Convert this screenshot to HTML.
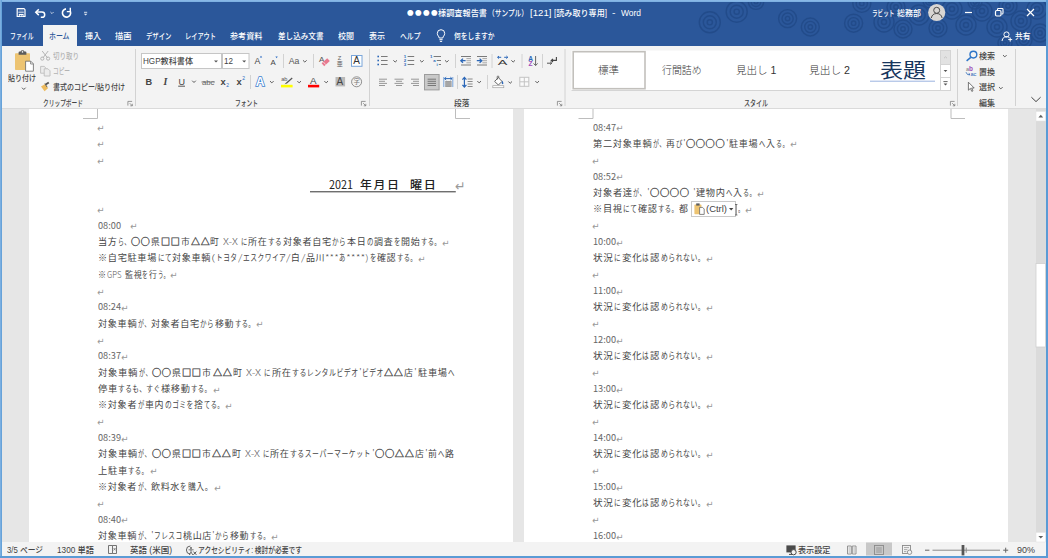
<!DOCTYPE html>
<html lang="ja">
<head>
<meta charset="utf-8">
<title>Word</title>
<style>
html,body{margin:0;padding:0;background:#fff;}
body{width:1048px;height:558px;overflow:hidden;font-family:"Liberation Sans","Noto Sans CJK JP",sans-serif;}
#app{position:relative;width:1048px;height:558px;overflow:hidden;background:#e6e6e6;}
.t{position:absolute;white-space:pre;transform-origin:0 50%;display:block;}
.b{position:absolute;display:block;}
svg{position:absolute;overflow:visible;}

</style>
</head>
<body>
<div id="app">
<!-- window chrome backgrounds -->
<div class="b" id="titlebar" style="left:0;top:0;width:1048px;height:46px;background:#2b579a;"></div>
<div class="b" id="hometab" style="left:43px;top:25px;width:33.5px;height:22px;background:#f3f3f3;"></div>
<div class="b" id="ribbon" style="left:0;top:46px;width:1048px;height:63px;background:#f3f3f3;"></div>
<div class="b" id="pageL" style="left:29px;top:109px;width:483.5px;height:433px;background:#fff;"></div>
<div class="b" id="pageR" style="left:523.5px;top:109px;width:484.5px;height:433px;background:#fff;"></div>
<div class="b" id="vscroll" style="left:1035.5px;top:109px;width:11px;height:433px;background:#dbdbdb;"></div>
<div class="b" id="statusbar" style="left:0;top:542px;width:1048px;height:16px;background:#f3f3f3;"></div>
<svg id="gfx" width="1048" height="558" viewBox="0 0 1048 558" style="left:0;top:0;">
<defs>
<path id="dd" d="M-1.8,-0.9 L0,0.9 L1.8,-0.9" fill="none" stroke="#5a5a5a" stroke-width="1"/>
<path id="dl" d="M0.4,4.6 V0.4 H4.6 M2.2,2.2 L4.8,4.8 M4.8,2.8 V4.8 H2.8" fill="none" stroke="#7a7a7a" stroke-width="0.75"/>
<clipPath id="tbclip"><rect x="0" y="0" width="1046" height="46"/></clipPath>
</defs>
<!-- title bar decorative rings -->
<g fill="none" stroke="#1f4784" stroke-width="1.4" opacity="0.7" clip-path="url(#tbclip)">
<circle cx="709.8" cy="22.3" r="10.5"/><circle cx="709.8" cy="22.3" r="6.5"/><circle cx="709.8" cy="22.3" r="2.6"/>
<circle cx="736.7" cy="11.7" r="10.5"/><circle cx="736.7" cy="11.7" r="6.5"/><circle cx="736.7" cy="11.7" r="2.6"/>
<circle cx="756" cy="1.7" r="7.7"/><circle cx="756" cy="1.7" r="4.8"/><circle cx="756" cy="1.7" r="1.9"/>
<circle cx="787.6" cy="18.6" r="9"/><circle cx="787.6" cy="18.6" r="5.6"/><circle cx="787.6" cy="18.6" r="2.2"/>
<circle cx="810.3" cy="27" r="9"/><circle cx="810.3" cy="27" r="5.6"/><circle cx="810.3" cy="27" r="2.2"/>
<circle cx="853.6" cy="23.2" r="9"/><circle cx="853.6" cy="23.2" r="5.6"/><circle cx="853.6" cy="23.2" r="2.2"/>
<circle cx="861.8" cy="3.4" r="9"/><circle cx="861.8" cy="3.4" r="5.6"/><circle cx="861.8" cy="3.4" r="2.2"/>
<circle cx="884" cy="22" r="10"/><circle cx="884" cy="22" r="6.2"/><circle cx="884" cy="22" r="2.5"/>
<circle cx="903" cy="29" r="9"/><circle cx="903" cy="29" r="5.6"/><circle cx="903" cy="29" r="2.2"/>
<circle cx="896" cy="7" r="9"/><circle cx="896" cy="7" r="5.6"/><circle cx="896" cy="7" r="2.2"/>
<circle cx="919" cy="15" r="10"/><circle cx="919" cy="15" r="6.2"/><circle cx="919" cy="15" r="2.5"/>
<circle cx="938" cy="28" r="9"/><circle cx="938" cy="28" r="5.6"/><circle cx="938" cy="28" r="2.2"/>
<circle cx="952" cy="9" r="10"/><circle cx="952" cy="9" r="6.2"/><circle cx="952" cy="9" r="2.5"/>
<circle cx="966" cy="25" r="10"/><circle cx="966" cy="25" r="6.2"/><circle cx="966" cy="25" r="2.5"/>
<circle cx="982" cy="11" r="10"/><circle cx="982" cy="11" r="6.2"/><circle cx="982" cy="11" r="2.5"/>
<circle cx="997" cy="27" r="10"/><circle cx="997" cy="27" r="6.2"/><circle cx="997" cy="27" r="2.5"/>
<circle cx="1008" cy="6" r="9"/><circle cx="1008" cy="6" r="5.6"/><circle cx="1008" cy="6" r="2.2"/>
<circle cx="1021" cy="21" r="10"/><circle cx="1021" cy="21" r="6.2"/><circle cx="1021" cy="21" r="2.5"/>
<circle cx="1037" cy="9" r="10"/><circle cx="1037" cy="9" r="6.2"/><circle cx="1037" cy="9" r="2.5"/>
<circle cx="1040" cy="33" r="9"/><circle cx="1040" cy="33" r="5.6"/><circle cx="1040" cy="33" r="2.2"/>
<circle cx="1024" cy="40" r="8"/><circle cx="1024" cy="40" r="5.0"/><circle cx="1024" cy="40" r="2.0"/>
<circle cx="1005" cy="43" r="7"/><circle cx="1005" cy="43" r="4.3"/><circle cx="1005" cy="43" r="1.8"/>
<circle cx="975" cy="2" r="7"/><circle cx="975" cy="2" r="4.3"/><circle cx="975" cy="2" r="1.8"/>
<circle cx="930" cy="1" r="7"/><circle cx="930" cy="1" r="4.3"/><circle cx="930" cy="1" r="1.8"/>
</g>
<!-- QAT -->
<g id="qat" fill="none" stroke="#fff">
<path d="M17.2,8.7 H24 L25,9.7 V16.5 H17.2 Z" stroke-width="1.2"/>
<rect x="18.8" y="13.9" width="4.8" height="2.8" fill="#fff" stroke="none"/>
<path d="M18.4,12.2 H23.8" stroke-width="0.9"/>
<rect x="18.8" y="9.2" width="4.8" height="2.4" fill="#fff" stroke="none" opacity="0.18"/>
<rect x="19.8" y="15" width="1" height="1.2" fill="#2b579a" stroke="none"/><rect x="21.6" y="15" width="1" height="1.2" fill="#2b579a" stroke="none"/>
<path d="M36,12.1 H42 A2.7,2.6 0 0 1 42,17.3 H40.8" stroke-width="1.5"/>
<path d="M38.8,9.3 L35.8,12.2 L38.8,15.1" stroke-width="1.5"/>
<path d="M50.4,12 L52,13.6 L53.6,12" stroke-width="1" opacity="0.7"/>
<path d="M66,8.9 A4.1,4.1 0 1 0 70.4,11.6" stroke-width="1.6"/>
<path d="M70.3,7.8 V11.6 H66.8" stroke-width="1.4"/>
<path d="M84,12.3 H87.2" stroke-width="1" opacity="0.8"/>
<path d="M83.8,13.8 L85.6,15.6 L87.4,13.8 Z" fill="#fff" stroke="none" opacity="0.85"/>
</g>
<!-- account avatar and window buttons -->
<circle cx="936.7" cy="12.5" r="8.6" fill="#d9d6d3"/>
<circle cx="936.7" cy="10.3" r="3" fill="none" stroke="#4a4a4a" stroke-width="1"/>
<path d="M931.3,18 A5.5,5.5 0 0 1 942.1,18" fill="none" stroke="#4a4a4a" stroke-width="1"/>
<path d="M965,12.5 H972" stroke="#fff" stroke-width="1.2"/>
<rect x="995.5" y="10.5" width="5.5" height="5.5" rx="1.2" fill="none" stroke="#fff" stroke-width="1.2"/>
<path d="M997.5,10 V9.2 A0.8,0.8 0 0 1 998.3,8.5 H1002.2 A0.8,0.8 0 0 1 1003,9.3 V13.3 A0.8,0.8 0 0 1 1002.2,14 H1001.5" fill="none" stroke="#fff" stroke-width="1.1"/>
<path d="M1027,9 L1034,16 M1034,9 L1027,16" stroke="#fff" stroke-width="1.2"/>
<!-- share icon -->
<circle cx="1006.5" cy="34.5" r="2.6" fill="none" stroke="#fff" stroke-width="1"/>
<path d="M1002,41 A4.6,4.6 0 0 1 1009.5,37.6" fill="none" stroke="#fff" stroke-width="1"/>
<path d="M1008.2,39.6 H1012.2 M1010.2,37.6 V41.6" stroke="#fff" stroke-width="1"/>
<!-- tell me bulb -->
<path d="M439.2,38 C439.2,36.3 437.3,35.8 437.3,33.4 A3.7,3.7 0 0 1 444.7,33.4 C444.7,35.8 442.8,36.3 442.8,38 Z" fill="none" stroke="#fff" stroke-width="1"/>
<path d="M439.4,39.7 H442.6 M439.9,41.4 H442.1" stroke="#fff" stroke-width="1"/>
<!-- ribbon bottom edge -->
<path d="M2,108.5 H1046" stroke="#dadada" stroke-width="1"/>
<!-- ribbon group separators -->
<g stroke="#d2d2d2" stroke-width="1">
<path d="M135.5,49 V106 M369.5,49 V106 M565,49 V106 M957.5,49 V106 M1015.5,49 V106"/>
<path d="M283.5,54 V68 M313.5,54 V68 M455.5,54 V68 M492,54 V68 M522,54 V68 M542.5,54 V68"/>
<path d="M250.5,75 V89 M457.5,75 V89 M487.5,75 V89"/>
</g>
<!-- dialog launchers -->
<use href="#dl" x="127.5" y="101"/><use href="#dl" x="361" y="101"/><use href="#dl" x="557" y="101"/><use href="#dl" x="950" y="101"/>
<!-- paste -->
<rect x="15" y="53.2" width="15" height="16.8" rx="0.8" fill="#edc472"/>
<path d="M18.6,54.8 V52.6 Q18.6,51.6 19.6,51.6 H20.6 Q20.8,50.2 22.5,50.2 Q24.2,50.2 24.4,51.6 H25.4 Q26.4,51.6 26.4,52.6 V54.8 Z" fill="#5b5b5b"/>
<circle cx="22.5" cy="51.9" r="0.8" fill="#f3f3f3"/>
<path d="M25.6,61.2 H30.8 L33.4,63.8 V71.2 H25.6 Z" fill="#fff" stroke="#666" stroke-width="0.8"/>
<path d="M30.6,61.4 V64 H33.2" fill="none" stroke="#666" stroke-width="0.7"/>
<use href="#dd" x="23.8" y="88.6"/>
<!-- cut (disabled) -->
<g fill="none" stroke="#b4b4b4" stroke-width="1">
<path d="M42.2,51 L47.6,58 M48.2,51 L42.8,58"/>
<circle cx="42.3" cy="58.6" r="1.6"/><circle cx="48.1" cy="58.6" r="1.6"/>
</g>
<!-- copy (disabled) -->
<g fill="#ececec" stroke="#bdbdbd" stroke-width="0.9">
<path d="M40.6,66.4 H44.2 L46,68.2 V73.2 H40.6 Z"/>
<path d="M44.2,68.8 H48 L50,70.8 V76 H44.2 Z"/>
</g>
<!-- format painter -->
<path d="M41,86.6 L45.2,84 L48,88.2 L44.6,91.2 Z" fill="#edbb5e"/>
<path d="M45.6,84.6 L48.8,82.4" stroke="#555" stroke-width="1.8"/>
<path d="M44.8,83.6 L47.2,87.2" stroke="#555" stroke-width="0.9"/>
<!-- font name/size boxes -->
<rect x="141.5" y="53.5" width="80" height="15" fill="#fff" stroke="#c6c6c6" stroke-width="1"/>
<rect x="222.5" y="53.5" width="26.5" height="15" fill="#fff" stroke="#c6c6c6" stroke-width="1"/>
<path d="M214,60.4 H218 L216,62.6 Z M242.2,60.4 H246.2 L244.2,62.6 Z" fill="#555"/>
<!-- B I U abc x2 x2 -->
<g font-family="Liberation Sans, sans-serif" fill="#444" font-size="11">
<text x="145.6" y="84.9" font-weight="700" font-size="9.2">B</text>
<text x="163.6" y="84.9" font-style="italic" font-weight="700" font-family="Liberation Serif, serif" font-size="9.8">I</text>
<text x="178.4" y="84.6" font-size="9">U</text>
<text x="202" y="84.6" font-size="8" textLength="12.5" lengthAdjust="spacingAndGlyphs" fill="#666">abc</text>
<text x="220.6" y="85" font-weight="700" font-size="9.4">x</text>
<text x="226.2" y="86.6" font-size="5" fill="#2b6cc4">2</text>
<text x="236.6" y="85" font-weight="700" font-size="9.4">x</text>
<text x="242.2" y="80.4" font-size="5" fill="#2b6cc4">2</text>
</g>
<path d="M178.2,86.2 H185" stroke="#444" stroke-width="0.9"/>
<path d="M201.4,82 H215" stroke="#666" stroke-width="0.7"/>
<use href="#dd" x="194" y="81.6"/>
<!-- grow / shrink font -->
<g font-family="Liberation Sans, sans-serif" fill="#444">
<text x="254.4" y="64" font-size="8.8">A</text>
<text x="270.4" y="64.5" font-size="7.8">A</text>
<text x="288.8" y="63.6" font-size="8.4" textLength="10.6" lengthAdjust="spacingAndGlyphs" fill="#555">Aa</text>
</g>
<path d="M259.8,57.6 L261,55.8 L262.2,57.6 Z" fill="#2b6cc4"/>
<path d="M275.4,56.4 L276.6,58.2 L277.8,56.4 Z" fill="#2b6cc4"/>
<use href="#dd" x="304.8" y="61.2"/>
<!-- clear formatting -->
<text x="319" y="62.4" font-family="Liberation Sans, sans-serif" font-size="8" fill="#555">A</text>
<path d="M321.6,63.2 L327.2,58.2 L329.8,61 L324.2,66.2 Z" fill="#e8798f"/>
<path d="M323.2,61.8 L325.8,64.7" stroke="#f3f3f3" stroke-width="0.7"/>
<!-- phonetic guide -->
<g fill="#666" font-family="Liberation Sans, sans-serif">
<text x="337.8" y="60.2" font-size="5.8">Z</text>
<text x="336.8" y="66.4" font-size="6" font-family="Liberation Sans, Noto Sans CJK JP, sans-serif">亜</text>
</g>
<!-- char border -->
<rect x="351.5" y="55.5" width="10.5" height="10.8" fill="#fff" stroke="#7aa6da" stroke-width="1"/>
<text x="353.2" y="64.4" font-family="Liberation Sans, sans-serif" font-size="10" fill="#333">A</text>
<!-- text effects -->
<text x="255.8" y="86.4" font-family="Liberation Sans, sans-serif" font-size="12.2" font-weight="700" fill="#fff" stroke="#3d7fd0" stroke-width="1.5" paint-order="stroke">A</text>
<use href="#dd" x="271.8" y="82"/>
<!-- highlight -->
<text x="281.2" y="81.2" font-family="Liberation Sans, sans-serif" font-size="5.6" fill="#555">ab</text>
<path d="M284.6,84.2 L286.2,82.6 L291.8,77.4 L292.6,78.4 L287,83.6 Z" fill="#555"/>
<rect x="281" y="84.8" width="11.6" height="2.6" fill="#ffff00"/>
<use href="#dd" x="299.2" y="82"/>
<!-- font color -->
<text x="310" y="84" font-family="Liberation Sans, sans-serif" font-size="9.8" fill="#444">A</text>
<rect x="308" y="84.8" width="11.2" height="2.6" fill="#ff0000"/>
<use href="#dd" x="326.2" y="82"/>
<!-- char shading -->
<rect x="335.5" y="77" width="9.6" height="9.4" fill="#b9b9b9"/>
<text x="336.6" y="85.4" font-family="Liberation Sans, sans-serif" font-size="10" fill="#444">A</text>
<!-- enclosed char -->
<circle cx="356.6" cy="81.8" r="5" fill="none" stroke="#777" stroke-width="0.8"/>
<text x="353.4" y="84.4" font-family="Liberation Sans, Noto Sans CJK JP, sans-serif" font-size="6.4" fill="#777">字</text>
<!-- paragraph group row 1 -->
<g fill="#2b67b8">
<rect x="377.4" y="55.7" width="1.6" height="1.6"/><rect x="377.4" y="59.7" width="1.6" height="1.6"/><rect x="377.4" y="63.7" width="1.6" height="1.6"/>
</g>
<path d="M381,56.5 H387.6 M381,60.5 H387.6 M381,64.5 H387.6" stroke="#7a7a7a" stroke-width="1"/>
<use href="#dd" x="395.2" y="61.2"/>
<g font-family="Liberation Sans, sans-serif" font-size="4.4" fill="#2b67b8" font-weight="700">
<text x="403.8" y="58.2">1</text><text x="403.8" y="62.2">2</text><text x="403.8" y="66.2">3</text>
</g>
<path d="M407.6,56.5 H414.2 M407.6,60.5 H414.2 M407.6,64.5 H414.2" stroke="#7a7a7a" stroke-width="1"/>
<use href="#dd" x="421.8" y="61.2"/>
<g font-family="Liberation Sans, sans-serif" font-size="4.4" fill="#2b67b8" font-weight="700">
<text x="430" y="58.2">1</text><text x="433.2" y="62.2">a</text><text x="436.4" y="66.2">i</text>
</g>
<path d="M433.6,56.5 H441 M436.8,60.5 H441 M438.8,64.5 H441" stroke="#7a7a7a" stroke-width="1"/>
<use href="#dd" x="446.8" y="61.2"/>
<!-- indent icons -->
<g stroke="#7a7a7a" stroke-width="1">
<path d="M461,56.5 H471 M461,65 H471 M477,56.5 H487 M477,65 H487"/>
<path d="M466.4,58.6 H471 M466.4,60.7 H471 M466.4,62.8 H471 M482.4,58.6 H487 M482.4,60.7 H487 M482.4,62.8 H487" stroke="#a8a8a8"/>
</g>
<g stroke="#2b67b8" stroke-width="1.3" fill="none">
<path d="M465.6,60.7 H461 M463,58.6 L460.8,60.7 L463,62.8"/>
<path d="M476.8,60.7 H481.6 M479.6,58.6 L481.8,60.7 L479.6,62.8"/>
</g>
<!-- asian layout -->
<text x="497.8" y="64.6" font-family="Liberation Sans, sans-serif" font-size="7.8" fill="#3a3a3a" textLength="9.6" lengthAdjust="spacingAndGlyphs">A</text>
<g stroke="#2b67b8" stroke-width="1" fill="none">
<path d="M497.6,57.3 H501.2 M499,56 L497.6,57.3 L499,58.6"/>
<path d="M504.2,57.3 H507.8 M506.4,56 L507.8,57.3 L506.4,58.6"/>
</g>
<use href="#dd" x="513.2" y="61.2"/>
<!-- sort -->
<text x="528.2" y="60.6" font-family="Liberation Sans, sans-serif" font-size="6.6" font-weight="700" fill="#2b67b8">A</text>
<text x="528.4" y="66.2" font-family="Liberation Sans, sans-serif" font-size="6.6" font-weight="700" fill="#a04cb8">Z</text>
<path d="M535.6,56 V65.4 M533.6,63.4 L535.6,65.6 L537.6,63.4" stroke="#666" stroke-width="1" fill="none"/>
<!-- show marks -->
<g stroke="#444" stroke-width="1.1" fill="none">
<path d="M556.4,57 V60.4 H551.4 M553,58.8 L551.2,60.4 L553,62"/>
<path d="M547,63.2 H551.6 M550.2,61.8 L551.8,63.2 L550.2,64.6" stroke-width="0.9"/>
</g>
<!-- alignment row -->
<g stroke="#8c8c8c" stroke-width="0.9">
<path d="M379,79.2 H387 M379,81.3 H385 M379,83.4 H387 M379,85.5 H385"/>
<path d="M394.5,79.2 H403.5 M396,81.3 H402 M394.5,83.4 H403.5 M396,85.5 H402"/>
<path d="M411,79.2 H419 M413,81.3 H419 M411,83.4 H419 M413,85.5 H419"/>
</g>
<rect x="424.5" y="74.5" width="14.6" height="15.4" fill="#c9c9c9" stroke="#9c9c9c" stroke-width="1"/>
<path d="M427.6,79.2 H436 M427.6,81.3 H436 M427.6,83.4 H436 M427.6,85.5 H436" stroke="#777" stroke-width="1"/>
<!-- distributed -->
<path d="M443.8,77 V87 M452.8,77 V87" stroke="#6a9bd8" stroke-width="0.9"/>
<path d="M444.6,78.6 H452 M446.2,77.2 L444.6,78.6 L446.2,80 M450.4,77.2 L452,78.6 L450.4,80" stroke="#2b67b8" stroke-width="1" fill="none"/>
<rect x="445.2" y="81" width="6.4" height="6" fill="#9f9f9f"/>
<path d="M445.2,83 H451.6 M445.2,85 H451.6" stroke="#bdbdbd" stroke-width="0.5"/>
<!-- line spacing -->
<path d="M464.4,77.6 V86.8 M462.4,79.6 L464.4,77.4 L466.4,79.6 M462.4,84.8 L464.4,87 L466.4,84.8" stroke="#2b67b8" stroke-width="1.2" fill="none"/>
<path d="M467.6,79 H472.6 M467.6,81.5 H472.6 M467.6,84 H472.6 M467.6,86.5 H472.6" stroke="#8a8a8a" stroke-width="1"/>
<use href="#dd" x="479.2" y="82"/>
<!-- shading bucket -->
<path d="M494.6,81.4 L498.4,77.6 L502,81.4 L498.4,85 Z" fill="#fff" stroke="#555" stroke-width="0.9"/>
<path d="M497.2,79.6 V76.8 Q497.2,76 498,76 Q498.8,76 498.8,76.8 V78" fill="none" stroke="#555" stroke-width="0.8"/>
<path d="M502,80.4 Q503.6,82.4 503.4,83.6 Q502.6,84.8 501.8,83.6 Q501.6,82.4 502,80.4 Z" fill="#2b67b8"/>
<rect x="492.8" y="85.7" width="11" height="2" fill="#fff" stroke="#a0a0a0" stroke-width="0.7"/>
<use href="#dd" x="510.2" y="82.4"/>
<!-- borders -->
<rect x="519.8" y="77.3" width="9" height="9" fill="#fafafa" stroke="#c4c4c4" stroke-width="1"/>
<path d="M524.3,77.3 V86.3 M519.8,81.8 H528.8" stroke="#c4c4c4" stroke-width="1"/>
<use href="#dd" x="537.2" y="82"/>
<!-- styles gallery -->
<rect x="571.5" y="50.5" width="369" height="40" fill="#fff"/>
<path d="M571.5,90.5 H950.5" stroke="#d4d4d4" stroke-width="1"/>
<rect x="573.2" y="51.7" width="71.8" height="37" fill="#fff" stroke="#c2c0bc" stroke-width="1.6"/>
<path d="M870,81.2 H935" stroke="#8eaadb" stroke-width="0.9"/>
<rect x="940.5" y="50.5" width="10" height="14" fill="#e2e2e2" stroke="#d4d4d4" stroke-width="1"/>
<rect x="940.5" y="64.5" width="10" height="13" fill="#fff" stroke="#d4d4d4" stroke-width="1"/>
<rect x="940.5" y="77.5" width="10" height="13" fill="#fff" stroke="#d4d4d4" stroke-width="1"/>
<path d="M944,58.2 L945.5,56.8 L947,58.2" fill="none" stroke="#c2c2c2" stroke-width="0.9"/>
<path d="M943.6,70 H947.4 L945.5,72 Z" fill="#555"/>
<path d="M943.4,81.6 H947.6" stroke="#555" stroke-width="0.9"/>
<path d="M943.6,83.4 H947.4 L945.5,85.4 Z" fill="#555"/>
<!-- editing group -->
<circle cx="973.4" cy="54.6" r="3.4" fill="none" stroke="#2e75c8" stroke-width="1.4"/>
<path d="M970.8,57.4 L966.6,60.8" stroke="#2e75c8" stroke-width="1.5"/>
<use href="#dd" x="1004.8" y="56"/>
<g font-family="Liberation Sans, sans-serif" font-size="5.6">
<text x="966" y="71" fill="#777">a</text><text x="969" y="71" fill="#a04cb8" font-weight="700" font-size="6.4">b</text>
<text x="970.4" y="76.2" fill="#2b67b8">ac</text>
</g>
<path d="M966,72.2 L967.4,74.4 H969.8 M968.8,73.4 L970,74.4 L968.8,75.4" stroke="#2b67b8" stroke-width="0.8" fill="none"/>
<path d="M968.4,82.2 V90.2 L970.4,88.4 L971.8,91.4 L973,90.8 L971.6,88 L974.2,88 Z" fill="#fff" stroke="#555" stroke-width="0.8"/>
<use href="#dd" x="1000.8" y="88"/>
<path d="M1031.4,97.2 L1036,101.6 L1040.6,97.2" fill="none" stroke="#444" stroke-width="1"/>
<!-- page crop marks -->
<g stroke="#bdbdbd" stroke-width="1" fill="none">
<path d="M83,118.5 H97.5 V109"/>
<path d="M470,118.5 H455.5 V109"/>
<path d="M578.5,118.5 H593 V109"/>
<path d="M965,118.5 H951 V109"/>
</g>
<!-- date underline -->
<path d="M310,191.8 H455.8" stroke="#333" stroke-width="1"/>
<!-- paste options -->
<rect x="691.5" y="201.5" width="44" height="15" fill="#fff" stroke="#c9c9c9" stroke-width="1"/>
<rect x="694.4" y="204.6" width="7" height="9.6" rx="0.6" fill="#edc472"/>
<rect x="696.2" y="203.4" width="3.4" height="2.2" fill="#5b5b5b"/>
<path d="M699.6,207.4 H702.6 L704.2,209 V214.4 H699.6 Z" fill="#fff" stroke="#666" stroke-width="0.8"/>
<path d="M729,208 H733.4 L731.2,210.6 Z" fill="#444"/>
<path d="M736.2,204.5 V215 M735,204.5 H737.4 M735,215 H737.4" stroke="#555" stroke-width="0.8"/>
<!-- vertical scrollbar -->
<rect x="1036" y="111.5" width="9.5" height="9.5" fill="#fff" stroke="#e4e4e4" stroke-width="0.6"/>
<path d="M1038.4,117.4 H1043.2 L1040.8,114.8 Z" fill="#606060"/>
<rect x="1036" y="263.5" width="9.5" height="83.5" fill="#fff" stroke="#cfcfcf" stroke-width="0.8"/>
<rect x="1036" y="532.5" width="9.5" height="9.5" fill="#fff" stroke="#e4e4e4" stroke-width="0.6"/>
<path d="M1038.4,536 H1043.2 L1040.8,538.6 Z" fill="#606060"/>
<!-- status bar icons -->
<g fill="none" stroke="#666" stroke-width="0.9">
<path d="M108.5,545.5 H112.5 V553.5 H108.5 Z M112.5,545.5 H116.5 V553.5 H112.5"/>
<path d="M113.6,548 L115.6,550.4 M115.6,548 L113.6,550.4" stroke-width="0.7"/>
</g>
<g fill="none" stroke="#555" stroke-width="0.9">
<path d="M190.4,546 A4,4 0 1 0 190.4,554"/>
<circle cx="191" cy="548" r="0.9" fill="#555" stroke="none"/>
<path d="M188.6,549.8 H193.6 M191,549.8 V552 M191,552 L189.2,555 M191,552 L192.8,555" stroke-width="0.8"/>
<path d="M193.4,551.6 L196.4,554.8 M196.4,551.6 L193.4,554.8" stroke-width="1"/>
</g>
<!-- display settings icon -->
<rect x="786.4" y="545.4" width="9.2" height="7" fill="#4a4a4a"/>
<circle cx="793.6" cy="552.2" r="2.6" fill="#f3f3f3" stroke="#4a4a4a" stroke-width="1"/>
<path d="M789,554.4 H792" stroke="#4a4a4a" stroke-width="1"/>
<!-- view buttons -->
<g fill="none" stroke="#8a8a8a" stroke-width="0.9">
<path d="M847.5,546 H851.3 V554 H847.5 Z M852.3,546 H856 V554 H852.3 Z"/>
<path d="M848.6,548 H850.2 M848.6,550 H850.2 M848.6,552 H850.2 M853.4,548 H855 M853.4,550 H855 M853.4,552 H855" stroke-width="0.6"/>
</g>
<rect x="866" y="542.5" width="26" height="13" fill="#c8c8c8"/>
<rect x="874.5" y="545.5" width="9" height="9" fill="none" stroke="#8a8a8a" stroke-width="0.9"/>
<path d="M876.2,548 H881.8 M876.2,550 H881.8 M876.2,552 H881.8" stroke="#8a8a8a" stroke-width="0.8"/>
<g fill="none" stroke="#8a8a8a" stroke-width="0.9">
<rect x="902.5" y="545.5" width="8" height="8"/>
<path d="M904,547.6 H909 M904,549.6 H907.4 M904,551.6 H906.4" stroke-width="0.7"/>
<circle cx="909.6" cy="552.2" r="2.2" fill="#f3f3f3"/>
</g>
<!-- zoom slider -->
<path d="M925,550.2 H929.4" stroke="#666" stroke-width="1"/>
<path d="M932.5,550.2 H1000" stroke="#8a8a8a" stroke-width="1"/>
<path d="M966.2,547.6 V552.8" stroke="#8a8a8a" stroke-width="1"/>
<rect x="961.6" y="545" width="2.8" height="10.4" fill="#555"/>
<path d="M1003.2,550.2 H1008.2 M1005.7,547.7 V552.7" stroke="#666" stroke-width="1"/>

</svg>
<!-- window border -->
<div class="b" style="left:0;top:0;width:1048px;height:2px;background:linear-gradient(180deg,#8cbbe8,#79aee0);"></div>
<div class="b" style="left:0;top:0;width:2px;height:558px;background:linear-gradient(90deg,#86b6e4,#5b9bd5);"></div>
<div class="b" style="left:1046px;top:0;width:2px;height:558px;background:#5b9bd5;"></div>
<div class="b" style="left:0;top:555.5px;width:1048px;height:2.5px;background:#5b9bd5;"></div>

<div class="grp">
<span class="t" style="left:407px;top:8.40px;font-size:6.4px;line-height:10px;color:#fff;font-family:'Noto Sans CJK JP','Liberation Sans',sans-serif;transform:scaleX(1.0266);letter-spacing:1.4px;">●●●●</span>
<span class="t" style="left:438px;top:6.90px;font-size:8.4px;line-height:13px;color:#fff;font-weight:500;transform:scaleX(0.9751);">様調査報告書</span>
<span class="t" style="left:488px;top:6.90px;font-size:8.4px;line-height:13px;color:#fff;font-weight:500;transform:scaleX(0.8000);">（サンプル）</span>
<span class="t" style="left:529.5px;top:6.90px;font-size:8.4px;line-height:13px;color:#fff;font-weight:500;transform:scaleX(1.1534);">[121]</span>
<span class="t" style="left:554px;top:6.90px;font-size:8.4px;line-height:13px;color:#fff;font-weight:500;transform:scaleX(0.9653);">[読み取り専用]</span>
<span class="t" style="left:612px;top:6.90px;font-size:8.4px;line-height:13px;color:#fff;font-weight:500;transform:scaleX(1.2514);">-</span>
<span class="t" style="left:621px;top:6.90px;font-size:8.4px;line-height:13px;color:#fff;font-weight:500;transform:scaleX(1.0071);">Word</span>
<span class="t" style="left:871.5px;top:6.90px;font-size:8.4px;line-height:13px;color:#fff;font-weight:500;transform:scaleX(0.6716);">ラビット</span>
<span class="t" style="left:897px;top:6.90px;font-size:8.4px;line-height:13px;color:#fff;font-weight:500;transform:scaleX(0.9552);">総務部</span>
</div>
<div class="grp">
<span class="t" style="left:10px;top:29.90px;font-size:8.4px;line-height:13px;color:#fff;font-weight:500;transform:scaleX(0.7015);">ファイル</span>
<span class="t" style="left:49px;top:29.90px;font-size:8.4px;line-height:13px;color:#2b579a;font-weight:500;transform:scaleX(0.8241);">ホーム</span>
<span class="t" style="left:84.5px;top:29.90px;font-size:8.4px;line-height:13px;color:#fff;font-weight:500;transform:scaleX(0.9552);">挿入</span>
<span class="t" style="left:115px;top:29.90px;font-size:8.4px;line-height:13px;color:#fff;font-weight:500;transform:scaleX(0.9851);">描画</span>
<span class="t" style="left:146px;top:29.90px;font-size:8.4px;line-height:13px;color:#fff;font-weight:500;transform:scaleX(0.7612);">デザイン</span>
<span class="t" style="left:185px;top:29.90px;font-size:8.4px;line-height:13px;color:#fff;font-weight:500;transform:scaleX(0.7403);">レイアウト</span>
<span class="t" style="left:230px;top:29.90px;font-size:8.4px;line-height:13px;color:#fff;font-weight:500;transform:scaleX(0.9701);">参考資料</span>
<span class="t" style="left:277.5px;top:29.90px;font-size:8.4px;line-height:13px;color:#fff;font-weight:500;transform:scaleX(0.9055);">差し込み文書</span>
<span class="t" style="left:338px;top:29.90px;font-size:8.4px;line-height:13px;color:#fff;font-weight:500;transform:scaleX(0.9552);">校閲</span>
<span class="t" style="left:369px;top:29.90px;font-size:8.4px;line-height:13px;color:#fff;font-weight:500;transform:scaleX(0.9552);">表示</span>
<span class="t" style="left:399.5px;top:29.90px;font-size:8.4px;line-height:13px;color:#fff;font-weight:500;transform:scaleX(0.8159);">ヘルプ</span>
<span class="t" style="left:453.5px;top:29.90px;font-size:8.4px;line-height:13px;color:#fff;font-weight:500;transform:scaleX(0.8060);">何をしますか</span>
<span class="t" style="left:1015px;top:29.90px;font-size:8.4px;line-height:13px;color:#fff;font-weight:500;transform:scaleX(0.9254);">共有</span>
</div>
<div class="grp">
<span class="t" style="left:8px;top:71.90px;font-size:8.4px;line-height:13px;color:#444;font-weight:500;transform:scaleX(0.8358);">貼り付け</span>
<span class="t" style="left:53px;top:49.90px;font-size:8.4px;line-height:13px;color:#b3b3b3;font-weight:500;transform:scaleX(0.7761);">切り取り</span>
<span class="t" style="left:53px;top:65.40px;font-size:8.4px;line-height:13px;color:#b3b3b3;font-weight:500;transform:scaleX(0.6766);">コピー</span>
<span class="t" style="left:53px;top:81.40px;font-size:8.4px;line-height:13px;color:#444;font-weight:500;transform:scaleX(0.8364);">書式のコピー/貼り付け</span>
<span class="t" style="left:43px;top:96.90px;font-size:8.4px;line-height:13px;color:#444;font-weight:500;transform:scaleX(0.6823);">クリップボード</span>
<span class="t" style="left:143px;top:55.40px;font-size:8.4px;line-height:13px;color:#444;font-weight:500;transform:scaleX(0.9679);">HGP教科書体</span>
<span class="t" style="left:224px;top:55.40px;font-size:8.4px;line-height:13px;color:#444;font-weight:500;transform:scaleX(0.9648);">12</span>
<span class="t" style="left:235px;top:96.90px;font-size:8.4px;line-height:13px;color:#444;font-weight:500;transform:scaleX(0.6866);">フォント</span>
<span class="t" style="left:454px;top:96.90px;font-size:8.4px;line-height:13px;color:#444;font-weight:500;transform:scaleX(0.9254);">段落</span>
<span class="t" style="left:598px;top:61.80px;font-size:10.5px;line-height:16px;color:#333;font-weight:300;transform:scaleX(1.0000);">標準</span>
<span class="t" style="left:662px;top:61.80px;font-size:10.5px;line-height:16px;color:#333;font-weight:300;transform:scaleX(0.9405);">行間詰め</span>
<span class="t" style="left:735.5px;top:61.80px;font-size:10.5px;line-height:16px;color:#333;font-weight:300;transform:scaleX(1.0058);">見出し 1</span>
<span class="t" style="left:809px;top:61.80px;font-size:10.5px;line-height:16px;color:#333;font-weight:300;transform:scaleX(1.0182);">見出し 2</span>
<span class="t" style="left:879.5px;top:55.60px;font-size:20px;line-height:30px;color:#17365d;transform:scaleX(1.1500);">表題</span>
<span class="t" style="left:743.5px;top:96.90px;font-size:8.4px;line-height:13px;color:#444;font-weight:500;transform:scaleX(0.7164);">スタイル</span>
<span class="t" style="left:978.5px;top:49.90px;font-size:8.4px;line-height:13px;color:#444;font-weight:500;transform:scaleX(0.9552);">検索</span>
<span class="t" style="left:978.5px;top:65.90px;font-size:8.4px;line-height:13px;color:#444;font-weight:500;transform:scaleX(0.9552);">置換</span>
<span class="t" style="left:978.5px;top:81.40px;font-size:8.4px;line-height:13px;color:#444;font-weight:500;transform:scaleX(0.9552);">選択</span>
<span class="t" style="left:978.5px;top:96.90px;font-size:8.4px;line-height:13px;color:#444;font-weight:500;transform:scaleX(0.9552);">編集</span>
</div>
<div class="grp">
<span class="t" style="left:7px;top:543.90px;font-size:8.4px;line-height:13px;color:#444;font-weight:500;transform:scaleX(0.9246);">3/5 ページ</span>
<span class="t" style="left:57px;top:543.90px;font-size:8.4px;line-height:13px;color:#444;font-weight:500;transform:scaleX(0.9809);">1300 単語</span>
<span class="t" style="left:130px;top:543.90px;font-size:8.4px;line-height:13px;color:#444;font-weight:500;transform:scaleX(1.0143);">英語 (米国)</span>
<span class="t" style="left:198px;top:543.90px;font-size:8.4px;line-height:13px;color:#444;font-weight:500;transform:scaleX(0.8040);">アクセシビリティ: 検討が必要です</span>
<span class="t" style="left:797.5px;top:543.90px;font-size:8.4px;line-height:13px;color:#444;font-weight:500;transform:scaleX(0.9701);">表示設定</span>
<span class="t" style="left:1017px;top:543.90px;font-size:8.4px;line-height:13px;color:#444;font-weight:500;transform:scaleX(1.0736);">90%</span>
</div>
<div class="ln">
<span class="t" style="left:97.2px;top:121.15px;font-size:9.8px;line-height:15px;color:#999;font-family:'DejaVu Sans',sans-serif;transform:scaleX(0.9004);">↵</span>
</div>
<div class="ln">
<span class="t" style="left:97.2px;top:137.49px;font-size:9.8px;line-height:15px;color:#999;font-family:'DejaVu Sans',sans-serif;transform:scaleX(0.9004);">↵</span>
</div>
<div class="ln">
<span class="t" style="left:97.2px;top:153.83px;font-size:9.8px;line-height:15px;color:#999;font-family:'DejaVu Sans',sans-serif;transform:scaleX(0.9004);">↵</span>
</div>
<div class="ln">
<span class="t" style="left:329px;top:175.60px;font-size:11.4px;line-height:17px;color:#222;font-family:'Noto Sans CJK JP','Liberation Sans',sans-serif;transform:scaleX(0.9487);">2021</span>
<span class="t" style="left:360px;top:175.90px;font-size:11px;line-height:16px;color:#222;font-weight:500;font-family:'Noto Sans CJK JP','Liberation Sans',sans-serif;transform:scaleX(1.0800);letter-spacing:1.5px;">年月日</span>
<span class="t" style="left:410px;top:175.90px;font-size:11px;line-height:16px;color:#222;font-weight:500;font-family:'Noto Sans CJK JP','Liberation Sans',sans-serif;transform:scaleX(1.1000);letter-spacing:1.5px;">曜日</span>
</div>
<div class="ln">
<span class="t" style="left:455px;top:175.90px;font-size:14px;line-height:21px;color:#999;font-family:'DejaVu Sans',sans-serif;transform:scaleX(0.8948);">↵</span>
</div>
<div class="ln">
<span class="t" style="left:97.2px;top:202.85px;font-size:9.8px;line-height:15px;color:#999;font-family:'DejaVu Sans',sans-serif;transform:scaleX(0.9004);">↵</span>
</div>
<div class="ln">
<span class="t" style="left:98px;top:217.74px;font-size:9.3px;line-height:14px;color:#666;font-family:'Noto Sans CJK JP','Liberation Sans',sans-serif;transform:scaleX(0.9899);">08:00</span>
<span class="t" style="left:130.2px;top:219.19px;font-size:9.8px;line-height:15px;color:#999;font-family:'DejaVu Sans',sans-serif;transform:scaleX(0.9004);">↵</span>
</div>
<div class="ln">
<span class="t" style="left:98.0px;top:235.03px;font-size:8.7px;line-height:13px;color:#444;font-family:'Noto Sans CJK JP','Liberation Sans',sans-serif;transform:scaleX(1.0501);letter-spacing:0.6px;">当方</span>
<span class="t" style="left:118.00806451612902px;top:235.03px;font-size:8.7px;line-height:13px;color:#444;font-family:'Noto Sans CJK JP','Liberation Sans',sans-serif;transform:scaleX(0.6856);letter-spacing:0.6px;">ら、</span>
<span class="t" style="left:131.2459677419355px;top:235.03px;font-size:8.7px;line-height:13px;color:#555;font-weight:700;font-family:'Noto Sans CJK JP','Liberation Sans',sans-serif;transform:scaleX(1.0366);letter-spacing:0.6px;-webkit-text-stroke:0.35px #555;">○○</span>
<span class="t" style="left:151.0040322580645px;top:235.03px;font-size:8.7px;line-height:13px;color:#444;font-family:'Noto Sans CJK JP','Liberation Sans',sans-serif;transform:scaleX(1.0088);letter-spacing:0.6px;">県</span>
<span class="t" style="left:160.88306451612902px;top:235.03px;font-size:8.7px;line-height:13px;color:#555;font-weight:700;font-family:'Noto Sans CJK JP','Liberation Sans',sans-serif;transform:scaleX(1.0366);letter-spacing:0.6px;-webkit-text-stroke:0.35px #555;">□□</span>
<span class="t" style="left:180.64112903225805px;top:235.03px;font-size:8.7px;line-height:13px;color:#444;font-family:'Noto Sans CJK JP','Liberation Sans',sans-serif;transform:scaleX(1.0088);letter-spacing:0.6px;">市</span>
<span class="t" style="left:190.52016129032256px;top:235.03px;font-size:8.7px;line-height:13px;color:#555;font-weight:700;font-family:'Noto Sans CJK JP','Liberation Sans',sans-serif;transform:scaleX(1.0366);letter-spacing:0.6px;-webkit-text-stroke:0.35px #555;">△△</span>
<span class="t" style="left:210.2782258064516px;top:235.03px;font-size:8.7px;line-height:13px;color:#444;font-family:'Noto Sans CJK JP','Liberation Sans',sans-serif;transform:scaleX(1.0088);letter-spacing:0.6px;">町</span>
<span class="t" style="left:222.97096774193545px;top:235.03px;font-size:8.7px;line-height:13px;color:#555;font-weight:300;font-family:'Noto Sans CJK JP','Liberation Sans',sans-serif;transform:scaleX(1.2510);">X-X</span>
<span class="t" style="left:241.10080645161287px;top:235.03px;font-size:8.7px;line-height:13px;color:#444;font-family:'Noto Sans CJK JP','Liberation Sans',sans-serif;transform:scaleX(0.7326);letter-spacing:0.6px;">に</span>
<span class="t" style="left:248.4112903225806px;top:235.03px;font-size:8.7px;line-height:13px;color:#444;font-family:'Noto Sans CJK JP','Liberation Sans',sans-serif;transform:scaleX(1.0366);letter-spacing:0.6px;">所在</span>
<span class="t" style="left:268.16935483870964px;top:235.03px;font-size:8.7px;line-height:13px;color:#444;font-family:'Noto Sans CJK JP','Liberation Sans',sans-serif;transform:scaleX(0.7601);letter-spacing:0.6px;">する</span>
<span class="t" style="left:282.7903225806451px;top:235.03px;font-size:8.7px;line-height:13px;color:#444;font-family:'Noto Sans CJK JP','Liberation Sans',sans-serif;transform:scaleX(1.0529);letter-spacing:0.6px;">対象者自宅</span>
<span class="t" style="left:332.1854838709677px;top:235.03px;font-size:8.7px;line-height:13px;color:#444;font-family:'Noto Sans CJK JP','Liberation Sans',sans-serif;transform:scaleX(0.7601);letter-spacing:0.6px;">から</span>
<span class="t" style="left:346.8064516129032px;top:235.03px;font-size:8.7px;line-height:13px;color:#444;font-family:'Noto Sans CJK JP','Liberation Sans',sans-serif;transform:scaleX(1.0366);letter-spacing:0.6px;">本日</span>
<span class="t" style="left:366.5645161290322px;top:235.03px;font-size:8.7px;line-height:13px;color:#444;font-family:'Noto Sans CJK JP','Liberation Sans',sans-serif;transform:scaleX(0.7326);letter-spacing:0.6px;">の</span>
<span class="t" style="left:373.87499999999994px;top:235.03px;font-size:8.7px;line-height:13px;color:#444;font-family:'Noto Sans CJK JP','Liberation Sans',sans-serif;transform:scaleX(1.0366);letter-spacing:0.6px;">調査</span>
<span class="t" style="left:393.63306451612897px;top:235.03px;font-size:8.7px;line-height:13px;color:#444;font-family:'Noto Sans CJK JP','Liberation Sans',sans-serif;transform:scaleX(0.7326);letter-spacing:0.6px;">を</span>
<span class="t" style="left:400.9435483870967px;top:235.03px;font-size:8.7px;line-height:13px;color:#444;font-family:'Noto Sans CJK JP','Liberation Sans',sans-serif;transform:scaleX(1.0366);letter-spacing:0.6px;">開始</span>
<span class="t" style="left:420.70161290322574px;top:235.03px;font-size:8.7px;line-height:13px;color:#444;font-family:'Noto Sans CJK JP','Liberation Sans',sans-serif;transform:scaleX(0.7192);letter-spacing:0.6px;">する。</span>
<span class="t" style="left:441.7px;top:235.53px;font-size:9.8px;line-height:15px;color:#999;font-family:'DejaVu Sans',sans-serif;transform:scaleX(0.9004);">↵</span>
</div>
<div class="ln">
<span class="t" style="left:98.0px;top:251.37px;font-size:8.7px;line-height:13px;color:#444;font-family:'Noto Sans CJK JP','Liberation Sans',sans-serif;transform:scaleX(1.0587);letter-spacing:0.6px;">※自宅駐車場</span>
<span class="t" style="left:157.50696594427245px;top:251.37px;font-size:8.7px;line-height:13px;color:#444;font-family:'Noto Sans CJK JP','Liberation Sans',sans-serif;transform:scaleX(0.7599);letter-spacing:0.6px;">にて</span>
<span class="t" style="left:172.12368421052633px;top:251.37px;font-size:8.7px;line-height:13px;color:#444;font-family:'Noto Sans CJK JP','Liberation Sans',sans-serif;transform:scaleX(1.0497);letter-spacing:0.6px;">対象車輌</span>
<span class="t" style="left:211.47832817337462px;top:251.37px;font-size:8.7px;line-height:13px;color:#555;font-weight:300;font-family:'Noto Sans CJK JP','Liberation Sans',sans-serif;transform:scaleX(1.5434);">(</span>
<span class="t" style="left:216.07260061919507px;top:251.37px;font-size:8.7px;line-height:13px;color:#444;font-family:'Noto Sans CJK JP','Liberation Sans',sans-serif;transform:scaleX(0.7686);letter-spacing:0.6px;">トヨタ</span>
<span class="t" style="left:237.84767801857586px;top:251.37px;font-size:8.7px;line-height:13px;color:#555;font-weight:300;font-family:'Noto Sans CJK JP','Liberation Sans',sans-serif;transform:scaleX(1.2922);">/</span>
<span class="t" style="left:242.63947368421054px;top:251.37px;font-size:8.7px;line-height:13px;color:#444;font-family:'Noto Sans CJK JP','Liberation Sans',sans-serif;transform:scaleX(0.7778);letter-spacing:0.6px;">エスクワイア</span>
<span class="t" style="left:286.33962848297216px;top:251.37px;font-size:8.7px;line-height:13px;color:#555;font-weight:300;font-family:'Noto Sans CJK JP','Liberation Sans',sans-serif;transform:scaleX(1.2922);">/</span>
<span class="t" style="left:291.1314241486068px;top:251.37px;font-size:8.7px;line-height:13px;color:#444;font-family:'Noto Sans CJK JP','Liberation Sans',sans-serif;transform:scaleX(1.0085);letter-spacing:0.6px;">白</span>
<span class="t" style="left:300.8575851393189px;top:251.37px;font-size:8.7px;line-height:13px;color:#555;font-weight:300;font-family:'Noto Sans CJK JP','Liberation Sans',sans-serif;transform:scaleX(1.2922);">/</span>
<span class="t" style="left:305.6493808049536px;top:251.37px;font-size:8.7px;line-height:13px;color:#444;font-family:'Noto Sans CJK JP','Liberation Sans',sans-serif;transform:scaleX(1.0363);letter-spacing:0.6px;">品川</span>
<span class="t" style="left:325.25170278637773px;top:251.37px;font-size:8.7px;line-height:13px;color:#555;font-weight:300;font-family:'Noto Sans CJK JP','Liberation Sans',sans-serif;transform:scaleX(1.1887);">***</span>
<span class="t" style="left:339.32708978328174px;top:251.37px;font-size:8.7px;line-height:13px;color:#444;font-family:'Noto Sans CJK JP','Liberation Sans',sans-serif;transform:scaleX(0.7323);letter-spacing:0.6px;">あ</span>
<span class="t" style="left:346.4854489164087px;top:251.37px;font-size:8.7px;line-height:13px;color:#555;font-weight:300;font-family:'Noto Sans CJK JP','Liberation Sans',sans-serif;transform:scaleX(1.2575);">****)</span>
<span class="t" style="left:369.6469040247678px;top:251.37px;font-size:8.7px;line-height:13px;color:#444;font-family:'Noto Sans CJK JP','Liberation Sans',sans-serif;transform:scaleX(0.7323);letter-spacing:0.6px;">を</span>
<span class="t" style="left:376.95526315789476px;top:251.37px;font-size:8.7px;line-height:13px;color:#444;font-family:'Noto Sans CJK JP','Liberation Sans',sans-serif;transform:scaleX(1.0363);letter-spacing:0.6px;">確認</span>
<span class="t" style="left:396.7075851393189px;top:251.37px;font-size:8.7px;line-height:13px;color:#444;font-family:'Noto Sans CJK JP','Liberation Sans',sans-serif;transform:scaleX(0.7190);letter-spacing:0.6px;">する。</span>
<span class="t" style="left:417.7px;top:251.87px;font-size:9.8px;line-height:15px;color:#999;font-family:'DejaVu Sans',sans-serif;transform:scaleX(0.9004);">↵</span>
</div>
<div class="ln">
<span class="t" style="left:98.0px;top:267.71px;font-size:8.7px;line-height:13px;color:#444;font-family:'Noto Sans CJK JP','Liberation Sans',sans-serif;transform:scaleX(0.9309);letter-spacing:0.6px;">※</span>
<span class="t" style="left:107.0041095890411px;top:267.71px;font-size:8.7px;line-height:13px;color:#555;font-weight:300;font-family:'Noto Sans CJK JP','Liberation Sans',sans-serif;transform:scaleX(0.8996);">GPS</span>
<span class="t" style="left:124.51712328767124px;top:267.71px;font-size:8.7px;line-height:13px;color:#444;font-family:'Noto Sans CJK JP','Liberation Sans',sans-serif;transform:scaleX(0.9316);letter-spacing:0.6px;">監視</span>
<span class="t" style="left:142.32534246575344px;top:267.71px;font-size:8.7px;line-height:13px;color:#444;font-family:'Noto Sans CJK JP','Liberation Sans',sans-serif;transform:scaleX(0.6550);letter-spacing:0.6px;">を</span>
<span class="t" style="left:148.91438356164386px;top:267.71px;font-size:8.7px;line-height:13px;color:#444;font-family:'Noto Sans CJK JP','Liberation Sans',sans-serif;transform:scaleX(0.9040);letter-spacing:0.6px;">行</span>
<span class="t" style="left:157.81849315068496px;top:267.71px;font-size:8.7px;line-height:13px;color:#444;font-family:'Noto Sans CJK JP','Liberation Sans',sans-serif;transform:scaleX(0.6329);letter-spacing:0.6px;">う。</span>
<span class="t" style="left:170.2px;top:268.21px;font-size:9.8px;line-height:15px;color:#999;font-family:'DejaVu Sans',sans-serif;transform:scaleX(0.9004);">↵</span>
</div>
<div class="ln">
<span class="t" style="left:97.2px;top:284.55px;font-size:9.8px;line-height:15px;color:#999;font-family:'DejaVu Sans',sans-serif;transform:scaleX(0.9004);">↵</span>
</div>
<div class="ln">
<span class="t" style="left:98px;top:299.44px;font-size:9.3px;line-height:14px;color:#666;font-family:'Noto Sans CJK JP','Liberation Sans',sans-serif;transform:scaleX(0.9899);">08:24</span>
<span class="t" style="left:120.7px;top:300.89px;font-size:9.8px;line-height:15px;color:#999;font-family:'DejaVu Sans',sans-serif;transform:scaleX(0.9004);">↵</span>
</div>
<div class="ln">
<span class="t" style="left:98.0px;top:316.73px;font-size:8.7px;line-height:13px;color:#444;font-family:'Noto Sans CJK JP','Liberation Sans',sans-serif;transform:scaleX(1.0563);letter-spacing:0.6px;">対象車輌</span>
<span class="t" style="left:137.74685534591194px;top:316.73px;font-size:8.7px;line-height:13px;color:#444;font-family:'Noto Sans CJK JP','Liberation Sans',sans-serif;transform:scaleX(0.6917);letter-spacing:0.6px;">が、</span>
<span class="t" style="left:150.97830188679245px;top:316.73px;font-size:8.7px;line-height:13px;color:#444;font-family:'Noto Sans CJK JP','Liberation Sans',sans-serif;transform:scaleX(1.0524);letter-spacing:0.6px;">対象者自宅</span>
<span class="t" style="left:200.34937106918238px;top:316.73px;font-size:8.7px;line-height:13px;color:#444;font-family:'Noto Sans CJK JP','Liberation Sans',sans-serif;transform:scaleX(0.7597);letter-spacing:0.6px;">から</span>
<span class="t" style="left:214.96320754716982px;top:316.73px;font-size:8.7px;line-height:13px;color:#444;font-family:'Noto Sans CJK JP','Liberation Sans',sans-serif;transform:scaleX(1.0361);letter-spacing:0.6px;">移動</span>
<span class="t" style="left:234.7116352201258px;top:316.73px;font-size:8.7px;line-height:13px;color:#444;font-family:'Noto Sans CJK JP','Liberation Sans',sans-serif;transform:scaleX(0.7189);letter-spacing:0.6px;">する。</span>
<span class="t" style="left:255.7px;top:317.23px;font-size:9.8px;line-height:15px;color:#999;font-family:'DejaVu Sans',sans-serif;transform:scaleX(0.9004);">↵</span>
</div>
<div class="ln">
<span class="t" style="left:97.2px;top:333.57px;font-size:9.8px;line-height:15px;color:#999;font-family:'DejaVu Sans',sans-serif;transform:scaleX(0.9004);">↵</span>
</div>
<div class="ln">
<span class="t" style="left:98px;top:348.46px;font-size:9.3px;line-height:14px;color:#666;font-family:'Noto Sans CJK JP','Liberation Sans',sans-serif;transform:scaleX(0.9899);">08:37</span>
<span class="t" style="left:120.7px;top:349.91px;font-size:9.8px;line-height:15px;color:#999;font-family:'DejaVu Sans',sans-serif;transform:scaleX(0.9004);">↵</span>
</div>
<div class="ln">
<span class="t" style="left:98.0px;top:365.75px;font-size:8.7px;line-height:13px;color:#444;font-family:'Noto Sans CJK JP','Liberation Sans',sans-serif;transform:scaleX(1.0783);letter-spacing:0.6px;">対象車輌</span>
<span class="t" style="left:138.56620553359684px;top:365.75px;font-size:8.7px;line-height:13px;color:#444;font-family:'Noto Sans CJK JP','Liberation Sans',sans-serif;transform:scaleX(0.7066);letter-spacing:0.6px;">が、</span>
<span class="t" style="left:152.07213438735178px;top:365.75px;font-size:8.7px;line-height:13px;color:#555;font-weight:700;font-family:'Noto Sans CJK JP','Liberation Sans',sans-serif;transform:scaleX(1.0581);letter-spacing:0.6px;-webkit-text-stroke:0.35px #555;">○○</span>
<span class="t" style="left:172.2302371541502px;top:365.75px;font-size:8.7px;line-height:13px;color:#444;font-family:'Noto Sans CJK JP','Liberation Sans',sans-serif;transform:scaleX(1.0304);letter-spacing:0.6px;">県</span>
<span class="t" style="left:182.3092885375494px;top:365.75px;font-size:8.7px;line-height:13px;color:#555;font-weight:700;font-family:'Noto Sans CJK JP','Liberation Sans',sans-serif;transform:scaleX(1.0581);letter-spacing:0.6px;-webkit-text-stroke:0.35px #555;">□□</span>
<span class="t" style="left:202.4673913043478px;top:365.75px;font-size:8.7px;line-height:13px;color:#444;font-family:'Noto Sans CJK JP','Liberation Sans',sans-serif;transform:scaleX(1.0304);letter-spacing:0.6px;">市</span>
<span class="t" style="left:212.54644268774703px;top:365.75px;font-size:8.7px;line-height:13px;color:#555;font-weight:700;font-family:'Noto Sans CJK JP','Liberation Sans',sans-serif;transform:scaleX(1.0581);letter-spacing:0.6px;-webkit-text-stroke:0.35px #555;">△△</span>
<span class="t" style="left:232.70454545454544px;top:365.75px;font-size:8.7px;line-height:13px;color:#444;font-family:'Noto Sans CJK JP','Liberation Sans',sans-serif;transform:scaleX(1.0304);letter-spacing:0.6px;">町</span>
<span class="t" style="left:245.6573122529644px;top:365.75px;font-size:8.7px;line-height:13px;color:#555;font-weight:300;font-family:'Noto Sans CJK JP','Liberation Sans',sans-serif;transform:scaleX(1.2766);">X-X</span>
<span class="t" style="left:264.151185770751px;top:365.75px;font-size:8.7px;line-height:13px;color:#444;font-family:'Noto Sans CJK JP','Liberation Sans',sans-serif;transform:scaleX(0.7485);letter-spacing:0.6px;">に</span>
<span class="t" style="left:271.60968379446643px;top:365.75px;font-size:8.7px;line-height:13px;color:#444;font-family:'Noto Sans CJK JP','Liberation Sans',sans-serif;transform:scaleX(1.0581);letter-spacing:0.6px;">所在</span>
<span class="t" style="left:291.76778656126487px;top:365.75px;font-size:8.7px;line-height:13px;color:#444;font-family:'Noto Sans CJK JP','Liberation Sans',sans-serif;transform:scaleX(0.7970);letter-spacing:0.6px;">するレンタルビデオ</span>
<span class="t" style="left:358.74426877470364px;top:365.75px;font-size:8.7px;line-height:13px;color:#555;font-weight:300;font-family:'Noto Sans CJK JP','Liberation Sans',sans-serif;transform:scaleX(1.3001);">&#x27;</span>
<span class="t" style="left:361.91798418972337px;top:365.75px;font-size:8.7px;line-height:13px;color:#444;font-family:'Noto Sans CJK JP','Liberation Sans',sans-serif;transform:scaleX(0.7848);letter-spacing:0.6px;">ビデオ</span>
<span class="t" style="left:384.2934782608696px;top:365.75px;font-size:8.7px;line-height:13px;color:#555;font-weight:700;font-family:'Noto Sans CJK JP','Liberation Sans',sans-serif;transform:scaleX(1.0581);letter-spacing:0.6px;-webkit-text-stroke:0.35px #555;">△△</span>
<span class="t" style="left:404.45158102766806px;top:365.75px;font-size:8.7px;line-height:13px;color:#444;font-family:'Noto Sans CJK JP','Liberation Sans',sans-serif;transform:scaleX(1.0304);letter-spacing:0.6px;">店</span>
<span class="t" style="left:414.38063241106727px;top:365.75px;font-size:8.7px;line-height:13px;color:#555;font-weight:300;font-family:'Noto Sans CJK JP','Liberation Sans',sans-serif;transform:scaleX(1.3001);">&#x27;</span>
<span class="t" style="left:417.554347826087px;top:365.75px;font-size:8.7px;line-height:13px;color:#444;font-family:'Noto Sans CJK JP','Liberation Sans',sans-serif;transform:scaleX(1.0668);letter-spacing:0.6px;">駐車場</span>
<span class="t" style="left:447.7915019762846px;top:365.75px;font-size:8.7px;line-height:13px;color:#444;font-family:'Noto Sans CJK JP','Liberation Sans',sans-serif;transform:scaleX(0.7485);letter-spacing:0.6px;">へ</span>
</div>
<div class="ln">
<span class="t" style="left:98.0px;top:382.09px;font-size:8.7px;line-height:13px;color:#444;font-family:'Noto Sans CJK JP','Liberation Sans',sans-serif;transform:scaleX(1.0650);letter-spacing:0.6px;">停車</span>
<span class="t" style="left:118.28514938488577px;top:382.09px;font-size:8.7px;line-height:13px;color:#444;font-family:'Noto Sans CJK JP','Liberation Sans',sans-serif;transform:scaleX(0.7676);letter-spacing:0.6px;">するも、すぐ</span>
<span class="t" style="left:161.36072056239016px;top:382.09px;font-size:8.7px;line-height:13px;color:#444;font-family:'Noto Sans CJK JP','Liberation Sans',sans-serif;transform:scaleX(1.0602);letter-spacing:0.6px;">様移動</span>
<span class="t" style="left:191.41344463971882px;top:382.09px;font-size:8.7px;line-height:13px;color:#444;font-family:'Noto Sans CJK JP','Liberation Sans',sans-serif;transform:scaleX(0.7296);letter-spacing:0.6px;">する。</span>
<span class="t" style="left:212.7px;top:382.59px;font-size:9.8px;line-height:15px;color:#999;font-family:'DejaVu Sans',sans-serif;transform:scaleX(0.9004);">↵</span>
</div>
<div class="ln">
<span class="t" style="left:98.0px;top:398.43px;font-size:8.7px;line-height:13px;color:#444;font-family:'Noto Sans CJK JP','Liberation Sans',sans-serif;transform:scaleX(1.0546);letter-spacing:0.6px;">※対象者</span>
<span class="t" style="left:137.68661971830986px;top:398.43px;font-size:8.7px;line-height:13px;color:#444;font-family:'Noto Sans CJK JP','Liberation Sans',sans-serif;transform:scaleX(0.7310);letter-spacing:0.6px;">が</span>
<span class="t" style="left:144.98239436619718px;top:398.43px;font-size:8.7px;line-height:13px;color:#444;font-family:'Noto Sans CJK JP','Liberation Sans',sans-serif;transform:scaleX(1.0345);letter-spacing:0.6px;">車内</span>
<span class="t" style="left:164.70070422535213px;top:398.43px;font-size:8.7px;line-height:13px;color:#444;font-family:'Noto Sans CJK JP','Liberation Sans',sans-serif;transform:scaleX(0.7720);letter-spacing:0.6px;">のゴミを</span>
<span class="t" style="left:193.88380281690144px;top:398.43px;font-size:8.7px;line-height:13px;color:#444;font-family:'Noto Sans CJK JP','Liberation Sans',sans-serif;transform:scaleX(1.0067);letter-spacing:0.6px;">捨</span>
<span class="t" style="left:203.7429577464789px;top:398.43px;font-size:8.7px;line-height:13px;color:#444;font-family:'Noto Sans CJK JP','Liberation Sans',sans-serif;transform:scaleX(0.7177);letter-spacing:0.6px;">てる。</span>
<span class="t" style="left:224.7px;top:398.93px;font-size:9.8px;line-height:15px;color:#999;font-family:'DejaVu Sans',sans-serif;transform:scaleX(0.9004);">↵</span>
</div>
<div class="ln">
<span class="t" style="left:97.2px;top:415.27px;font-size:9.8px;line-height:15px;color:#999;font-family:'DejaVu Sans',sans-serif;transform:scaleX(0.9004);">↵</span>
</div>
<div class="ln">
<span class="t" style="left:98px;top:430.16px;font-size:9.3px;line-height:14px;color:#666;font-family:'Noto Sans CJK JP','Liberation Sans',sans-serif;transform:scaleX(0.9899);">08:39</span>
<span class="t" style="left:120.7px;top:431.61px;font-size:9.8px;line-height:15px;color:#999;font-family:'DejaVu Sans',sans-serif;transform:scaleX(0.9004);">↵</span>
</div>
<div class="ln">
<span class="t" style="left:98.0px;top:447.45px;font-size:8.7px;line-height:13px;color:#444;font-family:'Noto Sans CJK JP','Liberation Sans',sans-serif;transform:scaleX(1.0704);letter-spacing:0.6px;">対象車輌</span>
<span class="t" style="left:138.27242152466368px;top:447.45px;font-size:8.7px;line-height:13px;color:#444;font-family:'Noto Sans CJK JP','Liberation Sans',sans-serif;transform:scaleX(0.7013);letter-spacing:0.6px;">が、</span>
<span class="t" style="left:151.679932735426px;top:447.45px;font-size:8.7px;line-height:13px;color:#555;font-weight:700;font-family:'Noto Sans CJK JP','Liberation Sans',sans-serif;transform:scaleX(1.0502);letter-spacing:0.6px;-webkit-text-stroke:0.35px #555;">○○</span>
<span class="t" style="left:171.69114349775785px;top:447.45px;font-size:8.7px;line-height:13px;color:#444;font-family:'Noto Sans CJK JP','Liberation Sans',sans-serif;transform:scaleX(1.0225);letter-spacing:0.6px;">県</span>
<span class="t" style="left:181.69674887892376px;top:447.45px;font-size:8.7px;line-height:13px;color:#555;font-weight:700;font-family:'Noto Sans CJK JP','Liberation Sans',sans-serif;transform:scaleX(1.0502);letter-spacing:0.6px;-webkit-text-stroke:0.35px #555;">□□</span>
<span class="t" style="left:201.7079596412556px;top:447.45px;font-size:8.7px;line-height:13px;color:#444;font-family:'Noto Sans CJK JP','Liberation Sans',sans-serif;transform:scaleX(1.0225);letter-spacing:0.6px;">市</span>
<span class="t" style="left:211.7135650224215px;top:447.45px;font-size:8.7px;line-height:13px;color:#555;font-weight:700;font-family:'Noto Sans CJK JP','Liberation Sans',sans-serif;transform:scaleX(1.0502);letter-spacing:0.6px;-webkit-text-stroke:0.35px #555;">△△</span>
<span class="t" style="left:231.72477578475335px;top:447.45px;font-size:8.7px;line-height:13px;color:#444;font-family:'Noto Sans CJK JP','Liberation Sans',sans-serif;transform:scaleX(1.0225);letter-spacing:0.6px;">町</span>
<span class="t" style="left:244.582062780269px;top:447.45px;font-size:8.7px;line-height:13px;color:#555;font-weight:300;font-family:'Noto Sans CJK JP','Liberation Sans',sans-serif;transform:scaleX(1.2672);">X-X</span>
<span class="t" style="left:262.942264573991px;top:447.45px;font-size:8.7px;line-height:13px;color:#444;font-family:'Noto Sans CJK JP','Liberation Sans',sans-serif;transform:scaleX(0.7426);letter-spacing:0.6px;">に</span>
<span class="t" style="left:270.3464125560538px;top:447.45px;font-size:8.7px;line-height:13px;color:#444;font-family:'Noto Sans CJK JP','Liberation Sans',sans-serif;transform:scaleX(1.0502);letter-spacing:0.6px;">所在</span>
<span class="t" style="left:290.3576233183856px;top:447.45px;font-size:8.7px;line-height:13px;color:#444;font-family:'Noto Sans CJK JP','Liberation Sans',sans-serif;transform:scaleX(0.7930);letter-spacing:0.6px;">するスーパーマーケット</span>
<span class="t" style="left:371.6532511210762px;top:447.45px;font-size:8.7px;line-height:13px;color:#555;font-weight:300;font-family:'Noto Sans CJK JP','Liberation Sans',sans-serif;transform:scaleX(1.2900);">&#x27;</span>
<span class="t" style="left:374.80493273542595px;top:447.45px;font-size:8.7px;line-height:13px;color:#555;font-weight:700;font-family:'Noto Sans CJK JP','Liberation Sans',sans-serif;transform:scaleX(1.0637);letter-spacing:0.6px;-webkit-text-stroke:0.35px #555;">○○△△</span>
<span class="t" style="left:414.82735426008963px;top:447.45px;font-size:8.7px;line-height:13px;color:#444;font-family:'Noto Sans CJK JP','Liberation Sans',sans-serif;transform:scaleX(1.0225);letter-spacing:0.6px;">店</span>
<span class="t" style="left:424.6829596412556px;top:447.45px;font-size:8.7px;line-height:13px;color:#555;font-weight:300;font-family:'Noto Sans CJK JP','Liberation Sans',sans-serif;transform:scaleX(1.2900);">&#x27;</span>
<span class="t" style="left:427.83464125560533px;top:447.45px;font-size:8.7px;line-height:13px;color:#444;font-family:'Noto Sans CJK JP','Liberation Sans',sans-serif;transform:scaleX(1.0225);letter-spacing:0.6px;">前</span>
<span class="t" style="left:437.84024663677127px;top:447.45px;font-size:8.7px;line-height:13px;color:#444;font-family:'Noto Sans CJK JP','Liberation Sans',sans-serif;transform:scaleX(0.7426);letter-spacing:0.6px;">へ</span>
<span class="t" style="left:445.24439461883406px;top:447.45px;font-size:8.7px;line-height:13px;color:#444;font-family:'Noto Sans CJK JP','Liberation Sans',sans-serif;transform:scaleX(1.0225);letter-spacing:0.6px;">路</span>
</div>
<div class="ln">
<span class="t" style="left:98.0px;top:463.79px;font-size:8.7px;line-height:13px;color:#444;font-family:'Noto Sans CJK JP','Liberation Sans',sans-serif;transform:scaleX(1.0715);letter-spacing:0.6px;">上駐車</span>
<span class="t" style="left:128.36811023622047px;top:463.79px;font-size:8.7px;line-height:13px;color:#444;font-family:'Noto Sans CJK JP','Liberation Sans',sans-serif;transform:scaleX(0.7312);letter-spacing:0.6px;">する。</span>
<span class="t" style="left:149.7px;top:464.29px;font-size:9.8px;line-height:15px;color:#999;font-family:'DejaVu Sans',sans-serif;transform:scaleX(0.9004);">↵</span>
</div>
<div class="ln">
<span class="t" style="left:98.0px;top:480.13px;font-size:8.7px;line-height:13px;color:#444;font-family:'Noto Sans CJK JP','Liberation Sans',sans-serif;transform:scaleX(1.0532);letter-spacing:0.6px;">※対象者</span>
<span class="t" style="left:137.6335616438356px;top:480.13px;font-size:8.7px;line-height:13px;color:#444;font-family:'Noto Sans CJK JP','Liberation Sans',sans-serif;transform:scaleX(0.6896);letter-spacing:0.6px;">が、</span>
<span class="t" style="left:150.82705479452054px;top:480.13px;font-size:8.7px;line-height:13px;color:#444;font-family:'Noto Sans CJK JP','Liberation Sans',sans-serif;transform:scaleX(1.0417);letter-spacing:0.6px;">飲料水</span>
<span class="t" style="left:180.36472602739724px;top:480.13px;font-size:8.7px;line-height:13px;color:#444;font-family:'Noto Sans CJK JP','Liberation Sans',sans-serif;transform:scaleX(0.7299);letter-spacing:0.6px;">を</span>
<span class="t" style="left:187.65068493150682px;top:480.13px;font-size:8.7px;line-height:13px;color:#444;font-family:'Noto Sans CJK JP','Liberation Sans',sans-serif;transform:scaleX(0.9004);letter-spacing:0.6px;">購入。</span>
<span class="t" style="left:213.7px;top:480.63px;font-size:9.8px;line-height:15px;color:#999;font-family:'DejaVu Sans',sans-serif;transform:scaleX(0.9004);">↵</span>
</div>
<div class="ln">
<span class="t" style="left:97.2px;top:496.97px;font-size:9.8px;line-height:15px;color:#999;font-family:'DejaVu Sans',sans-serif;transform:scaleX(0.9004);">↵</span>
</div>
<div class="ln">
<span class="t" style="left:98px;top:511.86px;font-size:9.3px;line-height:14px;color:#666;font-family:'Noto Sans CJK JP','Liberation Sans',sans-serif;transform:scaleX(0.9899);">08:40</span>
<span class="t" style="left:120.7px;top:513.31px;font-size:9.8px;line-height:15px;color:#999;font-family:'DejaVu Sans',sans-serif;transform:scaleX(0.9004);">↵</span>
</div>
<div class="ln">
<span class="t" style="left:98.0px;top:529.15px;font-size:8.7px;line-height:13px;color:#444;font-family:'Noto Sans CJK JP','Liberation Sans',sans-serif;transform:scaleX(1.0538);letter-spacing:0.6px;">対象車輌</span>
<span class="t" style="left:137.65435280641466px;top:529.15px;font-size:8.7px;line-height:13px;color:#444;font-family:'Noto Sans CJK JP','Liberation Sans',sans-serif;transform:scaleX(0.6900);letter-spacing:0.6px;">が、</span>
<span class="t" style="left:150.70481099656357px;top:529.15px;font-size:8.7px;line-height:13px;color:#555;font-weight:300;font-family:'Noto Sans CJK JP','Liberation Sans',sans-serif;transform:scaleX(1.2686);">&#x27;</span>
<span class="t" style="left:153.81013745704468px;top:529.15px;font-size:8.7px;line-height:13px;color:#444;font-family:'Noto Sans CJK JP','Liberation Sans',sans-serif;transform:scaleX(0.7713);letter-spacing:0.6px;">フレスコ</span>
<span class="t" style="left:182.96935853379154px;top:529.15px;font-size:8.7px;line-height:13px;color:#444;font-family:'Noto Sans CJK JP','Liberation Sans',sans-serif;transform:scaleX(1.0423);letter-spacing:0.6px;">桃山店</span>
<span class="t" style="left:212.3726231386025px;top:529.15px;font-size:8.7px;line-height:13px;color:#555;font-weight:300;font-family:'Noto Sans CJK JP','Liberation Sans',sans-serif;transform:scaleX(1.2686);">&#x27;</span>
<span class="t" style="left:215.47794959908362px;top:529.15px;font-size:8.7px;line-height:13px;color:#444;font-family:'Noto Sans CJK JP','Liberation Sans',sans-serif;transform:scaleX(0.7579);letter-spacing:0.6px;">から</span>
<span class="t" style="left:230.05756013745705px;top:529.15px;font-size:8.7px;line-height:13px;color:#444;font-family:'Noto Sans CJK JP','Liberation Sans',sans-serif;transform:scaleX(1.0336);letter-spacing:0.6px;">移動</span>
<span class="t" style="left:249.75973654066436px;top:529.15px;font-size:8.7px;line-height:13px;color:#444;font-family:'Noto Sans CJK JP','Liberation Sans',sans-serif;transform:scaleX(0.7171);letter-spacing:0.6px;">する。</span>
<span class="t" style="left:270.7px;top:529.65px;font-size:9.8px;line-height:15px;color:#999;font-family:'DejaVu Sans',sans-serif;transform:scaleX(0.9004);">↵</span>
</div>
<div class="ln">
<span class="t" style="left:593px;top:119.70px;font-size:9.3px;line-height:14px;color:#666;font-family:'Noto Sans CJK JP','Liberation Sans',sans-serif;transform:scaleX(0.9899);">08:47</span>
<span class="t" style="left:615.7px;top:121.15px;font-size:9.8px;line-height:15px;color:#999;font-family:'DejaVu Sans',sans-serif;transform:scaleX(0.9004);">↵</span>
</div>
<div class="ln">
<span class="t" style="left:593.0px;top:136.99px;font-size:8.7px;line-height:13px;color:#444;font-family:'Noto Sans CJK JP','Liberation Sans',sans-serif;transform:scaleX(1.0633);letter-spacing:0.6px;">第二対象車輌</span>
<span class="t" style="left:652.7641700404859px;top:136.99px;font-size:8.7px;line-height:13px;color:#444;font-family:'Noto Sans CJK JP','Liberation Sans',sans-serif;transform:scaleX(0.6950);letter-spacing:0.6px;">が、</span>
<span class="t" style="left:666.0556680161943px;top:136.99px;font-size:8.7px;line-height:13px;color:#444;font-family:'Noto Sans CJK JP','Liberation Sans',sans-serif;transform:scaleX(1.0131);letter-spacing:0.6px;">再</span>
<span class="t" style="left:675.9746963562753px;top:136.99px;font-size:8.7px;line-height:13px;color:#444;font-family:'Noto Sans CJK JP','Liberation Sans',sans-serif;transform:scaleX(0.7357);letter-spacing:0.6px;">び</span>
<span class="t" style="left:683.1647773279353px;top:136.99px;font-size:8.7px;line-height:13px;color:#555;font-weight:300;font-family:'Noto Sans CJK JP','Liberation Sans',sans-serif;transform:scaleX(1.2780);">&#x27;</span>
<span class="t" style="left:686.2904858299596px;top:136.99px;font-size:8.7px;line-height:13px;color:#555;font-weight:700;font-family:'Noto Sans CJK JP','Liberation Sans',sans-serif;transform:scaleX(1.0544);letter-spacing:0.6px;-webkit-text-stroke:0.35px #555;">○○○○</span>
<span class="t" style="left:725.8165991902836px;top:136.99px;font-size:8.7px;line-height:13px;color:#555;font-weight:300;font-family:'Noto Sans CJK JP','Liberation Sans',sans-serif;transform:scaleX(1.2780);">&#x27;</span>
<span class="t" style="left:728.9423076923078px;top:136.99px;font-size:8.7px;line-height:13px;color:#444;font-family:'Noto Sans CJK JP','Liberation Sans',sans-serif;transform:scaleX(1.0496);letter-spacing:0.6px;">駐車場</span>
<span class="t" style="left:758.6993927125508px;top:136.99px;font-size:8.7px;line-height:13px;color:#444;font-family:'Noto Sans CJK JP','Liberation Sans',sans-serif;transform:scaleX(0.7357);letter-spacing:0.6px;">へ</span>
<span class="t" style="left:766.0394736842107px;top:136.99px;font-size:8.7px;line-height:13px;color:#444;font-family:'Noto Sans CJK JP','Liberation Sans',sans-serif;transform:scaleX(1.0131);letter-spacing:0.6px;">入</span>
<span class="t" style="left:775.9585020242918px;top:136.99px;font-size:8.7px;line-height:13px;color:#444;font-family:'Noto Sans CJK JP','Liberation Sans',sans-serif;transform:scaleX(0.6885);letter-spacing:0.6px;">る。</span>
<span class="t" style="left:789.7px;top:137.49px;font-size:9.8px;line-height:15px;color:#999;font-family:'DejaVu Sans',sans-serif;transform:scaleX(0.9004);">↵</span>
</div>
<div class="ln">
<span class="t" style="left:592.2px;top:153.83px;font-size:9.8px;line-height:15px;color:#999;font-family:'DejaVu Sans',sans-serif;transform:scaleX(0.9004);">↵</span>
</div>
<div class="ln">
<span class="t" style="left:593px;top:168.72px;font-size:9.3px;line-height:14px;color:#666;font-family:'Noto Sans CJK JP','Liberation Sans',sans-serif;transform:scaleX(0.9899);">08:52</span>
<span class="t" style="left:615.7px;top:170.17px;font-size:9.8px;line-height:15px;color:#999;font-family:'DejaVu Sans',sans-serif;transform:scaleX(0.9004);">↵</span>
</div>
<div class="ln">
<span class="t" style="left:593.0px;top:186.01px;font-size:8.7px;line-height:13px;color:#444;font-family:'Noto Sans CJK JP','Liberation Sans',sans-serif;transform:scaleX(1.0718);letter-spacing:0.6px;">対象者達</span>
<span class="t" style="left:633.3235294117648px;top:186.01px;font-size:8.7px;line-height:13px;color:#444;font-family:'Noto Sans CJK JP','Liberation Sans',sans-serif;transform:scaleX(0.7022);letter-spacing:0.6px;">が、</span>
<span class="t" style="left:646.598161764706px;top:186.01px;font-size:8.7px;line-height:13px;color:#555;font-weight:300;font-family:'Noto Sans CJK JP','Liberation Sans',sans-serif;transform:scaleX(1.2917);">&#x27;</span>
<span class="t" style="left:649.7536764705883px;top:186.01px;font-size:8.7px;line-height:13px;color:#555;font-weight:700;font-family:'Noto Sans CJK JP','Liberation Sans',sans-serif;transform:scaleX(1.0651);letter-spacing:0.6px;-webkit-text-stroke:0.35px #555;">○○○○</span>
<span class="t" style="left:692.6827205882354px;top:186.01px;font-size:8.7px;line-height:13px;color:#555;font-weight:300;font-family:'Noto Sans CJK JP','Liberation Sans',sans-serif;transform:scaleX(1.2917);">&#x27;</span>
<span class="t" style="left:695.8382352941178px;top:186.01px;font-size:8.7px;line-height:13px;color:#444;font-family:'Noto Sans CJK JP','Liberation Sans',sans-serif;transform:scaleX(1.0603);letter-spacing:0.6px;">建物内</span>
<span class="t" style="left:725.8933823529413px;top:186.01px;font-size:8.7px;line-height:13px;color:#444;font-family:'Noto Sans CJK JP','Liberation Sans',sans-serif;transform:scaleX(0.7436);letter-spacing:0.6px;">へ</span>
<span class="t" style="left:733.3069852941178px;top:186.01px;font-size:8.7px;line-height:13px;color:#444;font-family:'Noto Sans CJK JP','Liberation Sans',sans-serif;transform:scaleX(1.0238);letter-spacing:0.6px;">入</span>
<span class="t" style="left:743.325367647059px;top:186.01px;font-size:8.7px;line-height:13px;color:#444;font-family:'Noto Sans CJK JP','Liberation Sans',sans-serif;transform:scaleX(0.6957);letter-spacing:0.6px;">る。</span>
<span class="t" style="left:757.2px;top:186.51px;font-size:9.8px;line-height:15px;color:#999;font-family:'DejaVu Sans',sans-serif;transform:scaleX(0.9004);">↵</span>
</div>
<div class="ln">
<span class="t" style="left:593.0px;top:202.35px;font-size:8.7px;line-height:13px;color:#444;font-family:'Noto Sans CJK JP','Liberation Sans',sans-serif;transform:scaleX(1.0661);letter-spacing:0.6px;">※目視</span>
<span class="t" style="left:623.218619246862px;top:202.35px;font-size:8.7px;line-height:13px;color:#444;font-family:'Noto Sans CJK JP','Liberation Sans',sans-serif;transform:scaleX(0.7689);letter-spacing:0.6px;">にて</span>
<span class="t" style="left:638.0031380753138px;top:202.35px;font-size:8.7px;line-height:13px;color:#444;font-family:'Noto Sans CJK JP','Liberation Sans',sans-serif;transform:scaleX(1.0485);letter-spacing:0.6px;">確認</span>
<span class="t" style="left:657.9822175732218px;top:202.35px;font-size:8.7px;line-height:13px;color:#444;font-family:'Noto Sans CJK JP','Liberation Sans',sans-serif;transform:scaleX(0.7275);letter-spacing:0.6px;">する。</span>
<span class="t" style="left:678.7604602510461px;top:202.35px;font-size:8.7px;line-height:13px;color:#444;font-family:'Noto Sans CJK JP','Liberation Sans',sans-serif;transform:scaleX(1.0207);letter-spacing:0.6px;">都</span>
<span class="t" style="left:737.5px;top:202.35px;font-size:8.7px;line-height:13px;color:#444;font-family:'Noto Sans CJK JP','Liberation Sans',sans-serif;transform:scaleX(0.6884);letter-spacing:0.6px;">。</span>
<span class="t" style="left:745.2px;top:202.85px;font-size:9.8px;line-height:15px;color:#999;font-family:'DejaVu Sans',sans-serif;transform:scaleX(0.9004);">↵</span>
<span class="t" style="left:706px;top:202.20px;font-size:9.4px;line-height:14px;color:#444;transform:scaleX(1.0083);">(Ctrl)</span>
</div>
<div class="ln">
<span class="t" style="left:592.2px;top:219.19px;font-size:9.8px;line-height:15px;color:#999;font-family:'DejaVu Sans',sans-serif;transform:scaleX(0.9004);">↵</span>
</div>
<div class="ln">
<span class="t" style="left:593px;top:234.08px;font-size:9.3px;line-height:14px;color:#666;font-family:'Noto Sans CJK JP','Liberation Sans',sans-serif;transform:scaleX(0.9899);">10:00</span>
<span class="t" style="left:615.7px;top:235.53px;font-size:9.8px;line-height:15px;color:#999;font-family:'DejaVu Sans',sans-serif;transform:scaleX(0.9004);">↵</span>
</div>
<div class="ln">
<span class="t" style="left:593.0px;top:251.37px;font-size:8.7px;line-height:13px;color:#444;font-family:'Noto Sans CJK JP','Liberation Sans',sans-serif;transform:scaleX(1.1050);letter-spacing:0.6px;">状況</span>
<span class="t" style="left:614.0292207792207px;top:251.37px;font-size:8.7px;line-height:13px;color:#444;font-family:'Noto Sans CJK JP','Liberation Sans',sans-serif;transform:scaleX(0.7732);letter-spacing:0.6px;">に</span>
<span class="t" style="left:621.7175324675325px;top:251.37px;font-size:8.7px;line-height:13px;color:#444;font-family:'Noto Sans CJK JP','Liberation Sans',sans-serif;transform:scaleX(1.0916);letter-spacing:0.6px;">変化</span>
<span class="t" style="left:642.4967532467532px;top:251.37px;font-size:8.7px;line-height:13px;color:#444;font-family:'Noto Sans CJK JP','Liberation Sans',sans-serif;transform:scaleX(0.7732);letter-spacing:0.6px;">は</span>
<span class="t" style="left:650.1850649350649px;top:251.37px;font-size:8.7px;line-height:13px;color:#444;font-family:'Noto Sans CJK JP','Liberation Sans',sans-serif;transform:scaleX(1.0638);letter-spacing:0.6px;">認</span>
<span class="t" style="left:660.5746753246754px;top:251.37px;font-size:8.7px;line-height:13px;color:#444;font-family:'Noto Sans CJK JP','Liberation Sans',sans-serif;transform:scaleX(0.7926);letter-spacing:0.6px;">められない。</span>
<span class="t" style="left:705.7px;top:251.87px;font-size:9.8px;line-height:15px;color:#999;font-family:'DejaVu Sans',sans-serif;transform:scaleX(0.9004);">↵</span>
</div>
<div class="ln">
<span class="t" style="left:592.2px;top:268.21px;font-size:9.8px;line-height:15px;color:#999;font-family:'DejaVu Sans',sans-serif;transform:scaleX(0.9004);">↵</span>
</div>
<div class="ln">
<span class="t" style="left:593px;top:283.10px;font-size:9.3px;line-height:14px;color:#666;font-family:'Noto Sans CJK JP','Liberation Sans',sans-serif;transform:scaleX(0.9899);">11:00</span>
<span class="t" style="left:615.7px;top:284.55px;font-size:9.8px;line-height:15px;color:#999;font-family:'DejaVu Sans',sans-serif;transform:scaleX(0.9004);">↵</span>
</div>
<div class="ln">
<span class="t" style="left:593.0px;top:300.39px;font-size:8.7px;line-height:13px;color:#444;font-family:'Noto Sans CJK JP','Liberation Sans',sans-serif;transform:scaleX(1.1050);letter-spacing:0.6px;">状況</span>
<span class="t" style="left:614.0292207792207px;top:300.39px;font-size:8.7px;line-height:13px;color:#444;font-family:'Noto Sans CJK JP','Liberation Sans',sans-serif;transform:scaleX(0.7732);letter-spacing:0.6px;">に</span>
<span class="t" style="left:621.7175324675325px;top:300.39px;font-size:8.7px;line-height:13px;color:#444;font-family:'Noto Sans CJK JP','Liberation Sans',sans-serif;transform:scaleX(1.0916);letter-spacing:0.6px;">変化</span>
<span class="t" style="left:642.4967532467532px;top:300.39px;font-size:8.7px;line-height:13px;color:#444;font-family:'Noto Sans CJK JP','Liberation Sans',sans-serif;transform:scaleX(0.7732);letter-spacing:0.6px;">は</span>
<span class="t" style="left:650.1850649350649px;top:300.39px;font-size:8.7px;line-height:13px;color:#444;font-family:'Noto Sans CJK JP','Liberation Sans',sans-serif;transform:scaleX(1.0638);letter-spacing:0.6px;">認</span>
<span class="t" style="left:660.5746753246754px;top:300.39px;font-size:8.7px;line-height:13px;color:#444;font-family:'Noto Sans CJK JP','Liberation Sans',sans-serif;transform:scaleX(0.7926);letter-spacing:0.6px;">められない。</span>
<span class="t" style="left:705.7px;top:300.89px;font-size:9.8px;line-height:15px;color:#999;font-family:'DejaVu Sans',sans-serif;transform:scaleX(0.9004);">↵</span>
</div>
<div class="ln">
<span class="t" style="left:592.2px;top:317.23px;font-size:9.8px;line-height:15px;color:#999;font-family:'DejaVu Sans',sans-serif;transform:scaleX(0.9004);">↵</span>
</div>
<div class="ln">
<span class="t" style="left:593px;top:332.12px;font-size:9.3px;line-height:14px;color:#666;font-family:'Noto Sans CJK JP','Liberation Sans',sans-serif;transform:scaleX(0.9899);">12:00</span>
<span class="t" style="left:615.7px;top:333.57px;font-size:9.8px;line-height:15px;color:#999;font-family:'DejaVu Sans',sans-serif;transform:scaleX(0.9004);">↵</span>
</div>
<div class="ln">
<span class="t" style="left:593.0px;top:349.41px;font-size:8.7px;line-height:13px;color:#444;font-family:'Noto Sans CJK JP','Liberation Sans',sans-serif;transform:scaleX(1.1050);letter-spacing:0.6px;">状況</span>
<span class="t" style="left:614.0292207792207px;top:349.41px;font-size:8.7px;line-height:13px;color:#444;font-family:'Noto Sans CJK JP','Liberation Sans',sans-serif;transform:scaleX(0.7732);letter-spacing:0.6px;">に</span>
<span class="t" style="left:621.7175324675325px;top:349.41px;font-size:8.7px;line-height:13px;color:#444;font-family:'Noto Sans CJK JP','Liberation Sans',sans-serif;transform:scaleX(1.0916);letter-spacing:0.6px;">変化</span>
<span class="t" style="left:642.4967532467532px;top:349.41px;font-size:8.7px;line-height:13px;color:#444;font-family:'Noto Sans CJK JP','Liberation Sans',sans-serif;transform:scaleX(0.7732);letter-spacing:0.6px;">は</span>
<span class="t" style="left:650.1850649350649px;top:349.41px;font-size:8.7px;line-height:13px;color:#444;font-family:'Noto Sans CJK JP','Liberation Sans',sans-serif;transform:scaleX(1.0638);letter-spacing:0.6px;">認</span>
<span class="t" style="left:660.5746753246754px;top:349.41px;font-size:8.7px;line-height:13px;color:#444;font-family:'Noto Sans CJK JP','Liberation Sans',sans-serif;transform:scaleX(0.7926);letter-spacing:0.6px;">められない。</span>
<span class="t" style="left:705.7px;top:349.91px;font-size:9.8px;line-height:15px;color:#999;font-family:'DejaVu Sans',sans-serif;transform:scaleX(0.9004);">↵</span>
</div>
<div class="ln">
<span class="t" style="left:592.2px;top:366.25px;font-size:9.8px;line-height:15px;color:#999;font-family:'DejaVu Sans',sans-serif;transform:scaleX(0.9004);">↵</span>
</div>
<div class="ln">
<span class="t" style="left:593px;top:381.14px;font-size:9.3px;line-height:14px;color:#666;font-family:'Noto Sans CJK JP','Liberation Sans',sans-serif;transform:scaleX(0.9899);">13:00</span>
<span class="t" style="left:615.7px;top:382.59px;font-size:9.8px;line-height:15px;color:#999;font-family:'DejaVu Sans',sans-serif;transform:scaleX(0.9004);">↵</span>
</div>
<div class="ln">
<span class="t" style="left:593.0px;top:398.43px;font-size:8.7px;line-height:13px;color:#444;font-family:'Noto Sans CJK JP','Liberation Sans',sans-serif;transform:scaleX(1.1050);letter-spacing:0.6px;">状況</span>
<span class="t" style="left:614.0292207792207px;top:398.43px;font-size:8.7px;line-height:13px;color:#444;font-family:'Noto Sans CJK JP','Liberation Sans',sans-serif;transform:scaleX(0.7732);letter-spacing:0.6px;">に</span>
<span class="t" style="left:621.7175324675325px;top:398.43px;font-size:8.7px;line-height:13px;color:#444;font-family:'Noto Sans CJK JP','Liberation Sans',sans-serif;transform:scaleX(1.0916);letter-spacing:0.6px;">変化</span>
<span class="t" style="left:642.4967532467532px;top:398.43px;font-size:8.7px;line-height:13px;color:#444;font-family:'Noto Sans CJK JP','Liberation Sans',sans-serif;transform:scaleX(0.7732);letter-spacing:0.6px;">は</span>
<span class="t" style="left:650.1850649350649px;top:398.43px;font-size:8.7px;line-height:13px;color:#444;font-family:'Noto Sans CJK JP','Liberation Sans',sans-serif;transform:scaleX(1.0638);letter-spacing:0.6px;">認</span>
<span class="t" style="left:660.5746753246754px;top:398.43px;font-size:8.7px;line-height:13px;color:#444;font-family:'Noto Sans CJK JP','Liberation Sans',sans-serif;transform:scaleX(0.7926);letter-spacing:0.6px;">められない。</span>
<span class="t" style="left:705.7px;top:398.93px;font-size:9.8px;line-height:15px;color:#999;font-family:'DejaVu Sans',sans-serif;transform:scaleX(0.9004);">↵</span>
</div>
<div class="ln">
<span class="t" style="left:592.2px;top:415.27px;font-size:9.8px;line-height:15px;color:#999;font-family:'DejaVu Sans',sans-serif;transform:scaleX(0.9004);">↵</span>
</div>
<div class="ln">
<span class="t" style="left:593px;top:430.16px;font-size:9.3px;line-height:14px;color:#666;font-family:'Noto Sans CJK JP','Liberation Sans',sans-serif;transform:scaleX(0.9899);">14:00</span>
<span class="t" style="left:615.7px;top:431.61px;font-size:9.8px;line-height:15px;color:#999;font-family:'DejaVu Sans',sans-serif;transform:scaleX(0.9004);">↵</span>
</div>
<div class="ln">
<span class="t" style="left:593.0px;top:447.45px;font-size:8.7px;line-height:13px;color:#444;font-family:'Noto Sans CJK JP','Liberation Sans',sans-serif;transform:scaleX(1.1050);letter-spacing:0.6px;">状況</span>
<span class="t" style="left:614.0292207792207px;top:447.45px;font-size:8.7px;line-height:13px;color:#444;font-family:'Noto Sans CJK JP','Liberation Sans',sans-serif;transform:scaleX(0.7732);letter-spacing:0.6px;">に</span>
<span class="t" style="left:621.7175324675325px;top:447.45px;font-size:8.7px;line-height:13px;color:#444;font-family:'Noto Sans CJK JP','Liberation Sans',sans-serif;transform:scaleX(1.0916);letter-spacing:0.6px;">変化</span>
<span class="t" style="left:642.4967532467532px;top:447.45px;font-size:8.7px;line-height:13px;color:#444;font-family:'Noto Sans CJK JP','Liberation Sans',sans-serif;transform:scaleX(0.7732);letter-spacing:0.6px;">は</span>
<span class="t" style="left:650.1850649350649px;top:447.45px;font-size:8.7px;line-height:13px;color:#444;font-family:'Noto Sans CJK JP','Liberation Sans',sans-serif;transform:scaleX(1.0638);letter-spacing:0.6px;">認</span>
<span class="t" style="left:660.5746753246754px;top:447.45px;font-size:8.7px;line-height:13px;color:#444;font-family:'Noto Sans CJK JP','Liberation Sans',sans-serif;transform:scaleX(0.7926);letter-spacing:0.6px;">められない。</span>
<span class="t" style="left:705.7px;top:447.95px;font-size:9.8px;line-height:15px;color:#999;font-family:'DejaVu Sans',sans-serif;transform:scaleX(0.9004);">↵</span>
</div>
<div class="ln">
<span class="t" style="left:592.2px;top:464.29px;font-size:9.8px;line-height:15px;color:#999;font-family:'DejaVu Sans',sans-serif;transform:scaleX(0.9004);">↵</span>
</div>
<div class="ln">
<span class="t" style="left:593px;top:479.18px;font-size:9.3px;line-height:14px;color:#666;font-family:'Noto Sans CJK JP','Liberation Sans',sans-serif;transform:scaleX(0.9899);">15:00</span>
<span class="t" style="left:615.7px;top:480.63px;font-size:9.8px;line-height:15px;color:#999;font-family:'DejaVu Sans',sans-serif;transform:scaleX(0.9004);">↵</span>
</div>
<div class="ln">
<span class="t" style="left:593.0px;top:496.47px;font-size:8.7px;line-height:13px;color:#444;font-family:'Noto Sans CJK JP','Liberation Sans',sans-serif;transform:scaleX(1.1050);letter-spacing:0.6px;">状況</span>
<span class="t" style="left:614.0292207792207px;top:496.47px;font-size:8.7px;line-height:13px;color:#444;font-family:'Noto Sans CJK JP','Liberation Sans',sans-serif;transform:scaleX(0.7732);letter-spacing:0.6px;">に</span>
<span class="t" style="left:621.7175324675325px;top:496.47px;font-size:8.7px;line-height:13px;color:#444;font-family:'Noto Sans CJK JP','Liberation Sans',sans-serif;transform:scaleX(1.0916);letter-spacing:0.6px;">変化</span>
<span class="t" style="left:642.4967532467532px;top:496.47px;font-size:8.7px;line-height:13px;color:#444;font-family:'Noto Sans CJK JP','Liberation Sans',sans-serif;transform:scaleX(0.7732);letter-spacing:0.6px;">は</span>
<span class="t" style="left:650.1850649350649px;top:496.47px;font-size:8.7px;line-height:13px;color:#444;font-family:'Noto Sans CJK JP','Liberation Sans',sans-serif;transform:scaleX(1.0638);letter-spacing:0.6px;">認</span>
<span class="t" style="left:660.5746753246754px;top:496.47px;font-size:8.7px;line-height:13px;color:#444;font-family:'Noto Sans CJK JP','Liberation Sans',sans-serif;transform:scaleX(0.7926);letter-spacing:0.6px;">められない。</span>
<span class="t" style="left:705.7px;top:496.97px;font-size:9.8px;line-height:15px;color:#999;font-family:'DejaVu Sans',sans-serif;transform:scaleX(0.9004);">↵</span>
</div>
<div class="ln">
<span class="t" style="left:592.2px;top:513.31px;font-size:9.8px;line-height:15px;color:#999;font-family:'DejaVu Sans',sans-serif;transform:scaleX(0.9004);">↵</span>
</div>
<div class="ln">
<span class="t" style="left:593px;top:528.20px;font-size:9.3px;line-height:14px;color:#666;font-family:'Noto Sans CJK JP','Liberation Sans',sans-serif;transform:scaleX(0.9899);">16:00</span>
<span class="t" style="left:615.7px;top:529.65px;font-size:9.8px;line-height:15px;color:#999;font-family:'DejaVu Sans',sans-serif;transform:scaleX(0.9004);">↵</span>
</div>
</div>
</body>
</html>
